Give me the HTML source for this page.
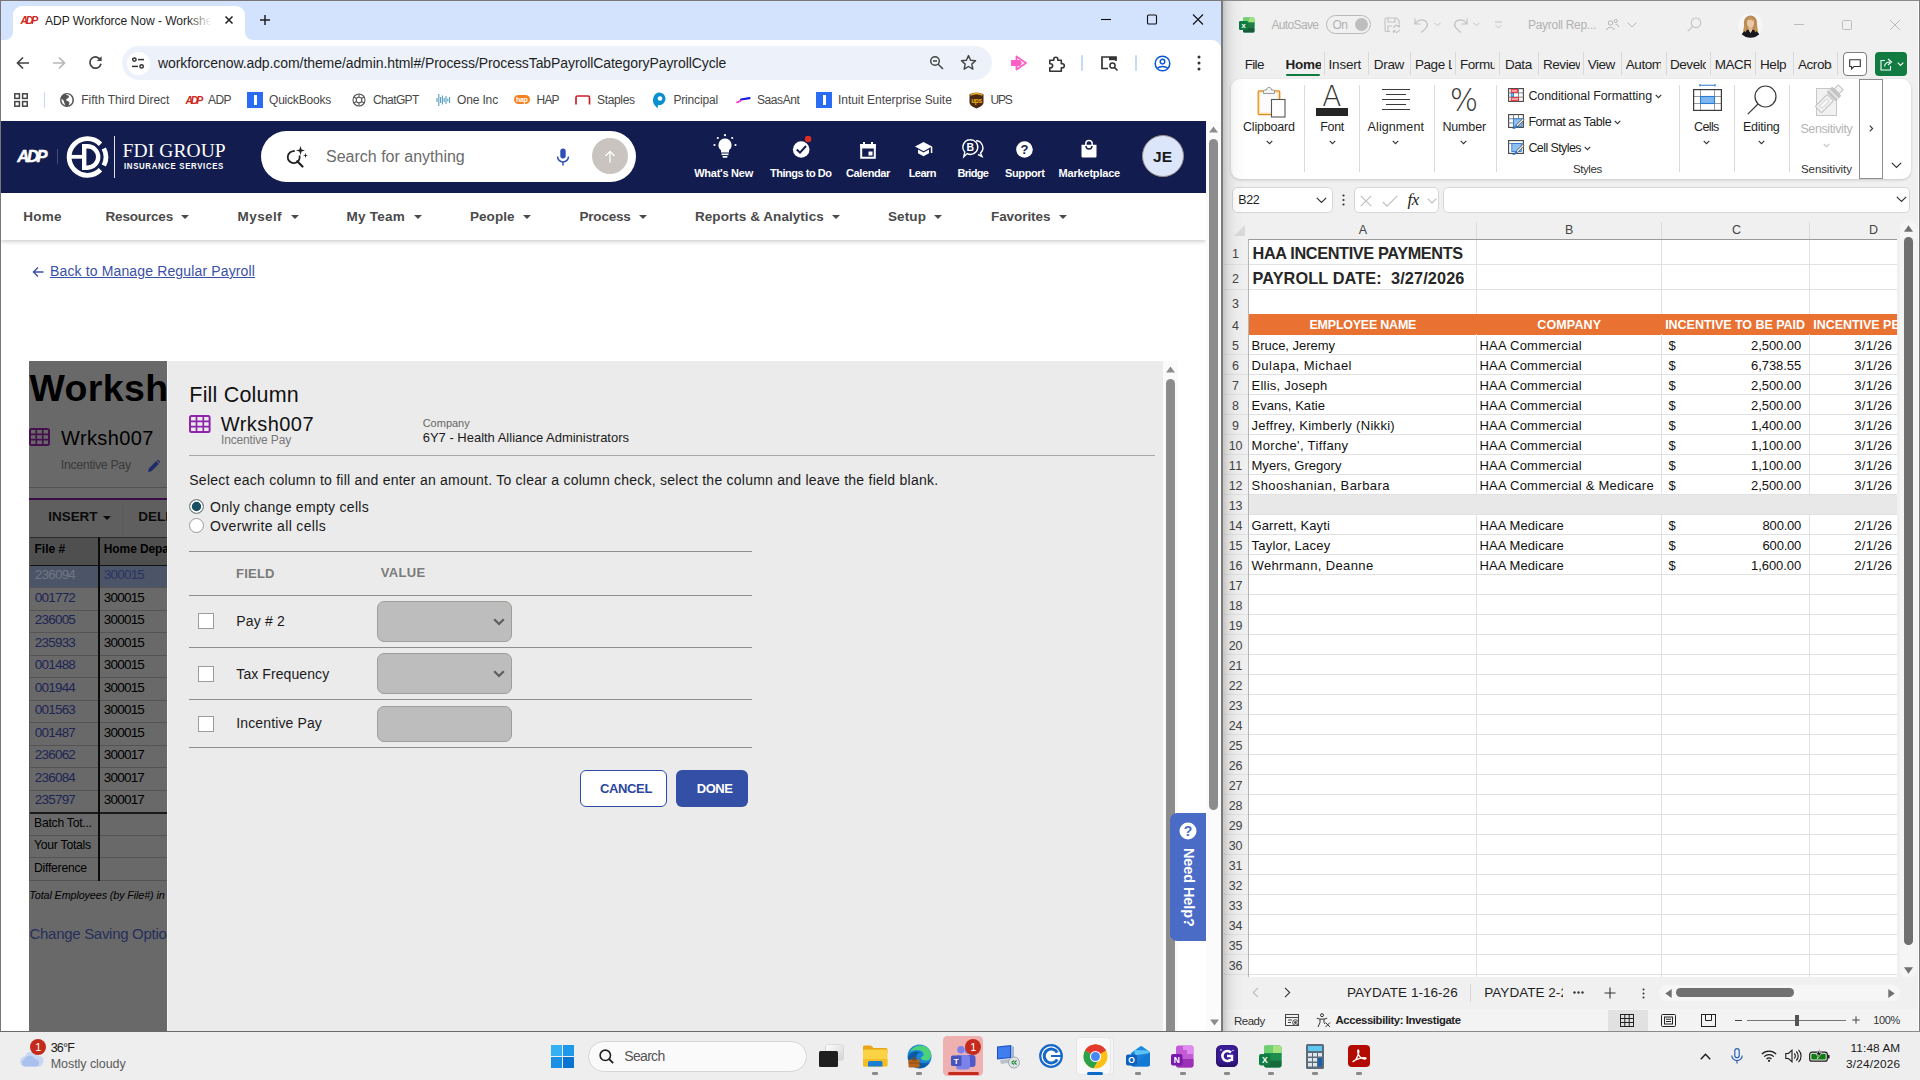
<!DOCTYPE html>
<html lang="en">
<head>
<meta charset="utf-8">
<title>ADP Workforce Now - Worksheet</title>
<style>
*{box-sizing:border-box;margin:0;padding:0}
html,body{width:1920px;height:1080px;overflow:hidden;background:#eeeeee;font-family:"Liberation Sans",sans-serif;color:#1f1f1f}
.abs{position:absolute}
div,span,svg,a{position:absolute;white-space:nowrap}
svg{overflow:visible}
/* ---------- chrome ---------- */
#chrome{left:0;top:0;width:1223px;height:1032px;background:#fff;overflow:hidden}
#tabstrip{left:0;top:0;width:1221px;height:52px;background:#d3e3fd}
#tab{left:13px;top:6px;width:232px;height:34px;background:#fff;border-radius:9px 9px 0 0}
#toolbar{left:1px;top:40px;width:1220px;height:42px;background:#fff;border-radius:0 9px 0 0}
#urlbar{left:122px;top:46px;width:870px;height:34px;border-radius:17px;background:#edf2fa}
#bookmarks{left:1px;top:82px;width:1220px;height:38px;background:#fff;font-size:12px;color:#3c3c3c}
.bm{top:10px;height:16px;line-height:16px;font-size:12px;color:#474747}
/* ---------- adp ---------- */
#adphead{left:1px;top:121px;width:1205px;height:72px;background:#121c4e}
#adpnav{left:1px;top:193px;width:1205px;height:47px;background:#fff;box-shadow:0 2px 4px rgba(0,0,0,.18)}
.nav{top:0;height:47px;line-height:47px;font-size:13.5px;font-weight:700;color:#4a4a4a}
.car{position:absolute;top:21.500px;width:0;height:0;border-left:4px solid transparent;border-right:4px solid transparent;border-top:4.500px solid #4a4a4a}
.hi{color:#fff;font-size:11px;line-height:14px;font-weight:700;top:45px;text-align:center;transform:translateX(-50%)}
/* ---------- excel ---------- */
#excel{left:1223px;top:0;width:697px;height:1032px;background:#f0f0f0;overflow:hidden}
/* ---------- taskbar ---------- */
#taskbar{left:0;top:1032px;width:1920px;height:48px;background:#eeeeee}
</style>
</head>
<body>
<!-- ====================== CHROME WINDOW ====================== -->
<div id="chrome">

 <div id="tabstrip"></div>
 <div id="tab"></div>
 <!-- tab curves -->
 <svg style="left:5px;top:32px" width="8" height="8"><path d="M8 0V8H0A8 8 0 0 0 8 0Z" fill="#fff"/></svg>
 <svg style="left:245px;top:32px" width="8" height="8"><path d="M0 0V8H8A8 8 0 0 1 0 0Z" fill="#fff"/></svg>
 <!-- adp favicon -->
 <svg style="left:21px;top:14px" width="17" height="12" viewBox="0 0 34 20"><g fill="#d0271d" font-family="Liberation Sans, sans-serif" font-weight="700" font-style="italic"><text x="-1" y="17" font-size="21" letter-spacing="-4.5">ADP</text></g></svg>
 <span style="left:45px;top:13px;font-size:12.1px;line-height:16px;color:#1f1f1f;width:168px;overflow:hidden;letter-spacing:-.05px">ADP Workforce Now - Workshee</span>
 <div style="left:188px;top:10px;width:26px;height:20px;background:linear-gradient(90deg,rgba(255,255,255,0),#fff 90%)"></div>
 <svg style="left:224px;top:15px" width="10" height="10" viewBox="0 0 10 10"><path d="M1.5 1.5L8.5 8.5M8.5 1.5L1.5 8.5" stroke="#1f1f1f" stroke-width="1.5" fill="none"/></svg>
 <svg style="left:259px;top:14px" width="12" height="12" viewBox="0 0 12 12"><path d="M6 1V11M1 6H11" stroke="#1f1f1f" stroke-width="1.5" fill="none"/></svg>
 <!-- window controls -->
 <svg style="left:1100px;top:14px" width="104" height="12" viewBox="0 0 104 12"><g stroke="#111" stroke-width="1.1" fill="none"><path d="M1 5.5H11"/><rect x="47.5" y="1" width="9" height="9" rx="1"/><path d="M93 .5L103 10.5M103 .5L93 10.5"/></g></svg>
 <div id="toolbar"></div>
 <!-- nav buttons -->
 <svg style="left:16px;top:56px" width="14" height="14" viewBox="0 0 14 14"><path d="M13 7H2M7 1.5L1.5 7L7 12.5" stroke="#444" stroke-width="1.7" fill="none"/></svg>
 <svg style="left:52px;top:56px" width="14" height="14" viewBox="0 0 14 14"><path d="M1 7H12M7 1.5L12.5 7L7 12.5" stroke="#b8b8b8" stroke-width="1.7" fill="none"/></svg>
 <svg style="left:88px;top:55px" width="15" height="15" viewBox="0 0 15 15"><path d="M12.6 5.2A5.6 5.6 0 1 0 13 8.8" stroke="#444" stroke-width="1.7" fill="none"/><path d="M13.6 1.2V6H8.8Z" fill="#444"/></svg>
 <div id="urlbar"></div>
 <div style="left:127px;top:52px;width:23px;height:23px;border-radius:50%;background:#fff"></div>
 <svg style="left:131px;top:56px" width="14" height="14" viewBox="0 0 14 14"><g stroke="#333" stroke-width="1.5" fill="none"><circle cx="3.4" cy="3.6" r="1.7"/><path d="M7 3.6H13"/><circle cx="10.6" cy="10.4" r="1.7"/><path d="M1 10.4H7"/></g></svg>
 <span style="left:158px;top:54px;font-size:14px;line-height:18px;color:#1f1f1f;letter-spacing:-.08px">workforcenow.adp.com/theme/admin.html#/Process/ProcessTabPayrollCategoryPayrollCycle</span>
 <svg style="left:929px;top:55px" width="16" height="16" viewBox="0 0 16 16"><g stroke="#444" stroke-width="1.5" fill="none"><circle cx="6" cy="6" r="4.3"/><path d="M9.2 9.2L14 14M4 6H8"/></g></svg>
 <svg style="left:960px;top:54px" width="17" height="17" viewBox="0 0 17 17"><path d="M8.5 1.6L10.6 6.3L15.6 6.8L11.8 10.1L12.9 15.1L8.5 12.5L4.1 15.1L5.2 10.1L1.4 6.8L6.4 6.3Z" stroke="#444" stroke-width="1.4" fill="none" stroke-linejoin="round"/></svg>
 <svg style="left:1010px;top:55px" width="18" height="16" viewBox="0 0 18 16"><path d="M1 5H6V11H1Z" fill="#ff5fc4"/><path d="M6.5 1.5L16 8L6.5 14.5Z" stroke="#ff5fc4" stroke-width="1.8" fill="none" stroke-linejoin="round"/><path d="M6 5H10L12 8L10 11H6Z" fill="#ff5fc4"/></svg>
 <svg style="left:1046.500px;top:54px" width="19" height="19" viewBox="0 0 19 19"><path d="M2.800 6.200H6.800V5.200A2 2 0 0 1 10.800 5.200V6.200H14.300V9.700H15.300A2 2 0 0 1 15.300 13.700H14.300V17.200H2.800V13.700H3.600A2 2 0 0 0 3.600 9.700H2.800Z" stroke="#333" stroke-width="1.600" fill="none" stroke-linejoin="round"/></svg>
 <div style="left:1081px;top:55px;width:2px;height:16px;background:#c7d9f7;border-radius:1px"></div>
 <svg style="left:1100px;top:55px" width="19" height="17" viewBox="0 0 19 17"><path d="M8 13.500H2V2H16V6" stroke="#333" stroke-width="1.7" fill="none"/><rect x="9" y="2" width="7" height="3.200" fill="#333"/><circle cx="12.500" cy="10.500" r="2.600" stroke="#333" stroke-width="1.5" fill="none"/><path d="M14.500 12.500L17.500 15.500" stroke="#333" stroke-width="1.6"/></svg>
 <div style="left:1135px;top:55px;width:2px;height:16px;background:#c7d9f7;border-radius:1px"></div>
 <svg style="left:1154px;top:55px" width="17" height="17" viewBox="0 0 17 17"><g stroke="#0b57d0" stroke-width="1.5" fill="none"><circle cx="8.500" cy="8.500" r="7.300"/><circle cx="8.500" cy="6.600" r="2.300"/><path d="M3.300 13.300C5.500 10.900 11.500 10.900 13.700 13.300"/></g></svg>
 <svg style="left:1197px;top:55px" width="4" height="16" viewBox="0 0 4 16"><g fill="#333"><circle cx="2" cy="2" r="1.500"/><circle cx="2" cy="8" r="1.500"/><circle cx="2" cy="14" r="1.500"/></g></svg>
 <div id="bookmarks">
  <svg style="left:13px;top:11px" width="14" height="14" viewBox="0 0 14 14"><g stroke="#444" stroke-width="1.5" fill="none"><rect x=".8" y=".8" width="4.6" height="4.6"/><rect x="8.6" y=".8" width="4.6" height="4.600"/><rect x=".8" y="8.600" width="4.600" height="4.600"/><rect x="8.600" y="8.600" width="4.600" height="4.600"/></g></svg>
  <div style="left:42.500px;top:10px;width:1.500px;height:16px;background:#c7d9f7"></div>
  <svg style="left:59px;top:11px" width="14" height="14" viewBox="0 0 14 14"><circle cx="7" cy="7" r="7" fill="#555"/><path d="M5.500 1.600C7 2.500 8.500 2 9 3.500C9 5 7.500 5 6.500 6C5.500 7.500 7.500 8 8.500 8.500C10 9 9.500 11 8.500 12.300C10.500 12 12.300 10 12.400 7.500C12.600 4 10 1.300 7 1.300Z" fill="#fff"/><path d="M1.500 6C3 6.500 4 7.500 4 9C4 10 5 10.500 5 12.200C2.800 11.500 1.200 9 1.500 6Z" fill="#fff"/></svg>
  <svg style="left:185px;top:13px" width="17" height="10" viewBox="0 0 34 20"><text x="-1" y="17" font-family="Liberation Sans, sans-serif" font-weight="700" font-style="italic" font-size="21" letter-spacing="-4.500" fill="#d0271d">ADP</text></svg>
  <div style="left:246px;top:10px;width:16px;height:16px;background:#2a6df4"></div><div style="left:252.500px;top:13px;width:3px;height:10px;background:#fff"></div>
  <svg style="left:351px;top:11px" width="14" height="14" viewBox="0 0 14 14"><g stroke="#555" stroke-width="1.100" fill="none"><circle cx="7" cy="7" r="6"/><circle cx="7" cy="7" r="2.800"/><path d="M7 1V4.200M7 9.800V13M1.800 4L4.600 5.600M9.400 8.400L12.200 10M1.800 10L4.600 8.400M9.400 5.600L12.200 4"/></g></svg>
  <svg style="left:434.500px;top:10px" width="15" height="16" viewBox="0 0 15 16"><g stroke="#5a9fc0" stroke-width="1.100" fill="none"><path d="M1 6V10M2.800 2V14M4.600 5V11M6.400 3.500V12.500M8.200 6V10M10 4V12M11.800 6.500V9.500M13.600 5V11"/></g></svg>
  <div style="left:513px;top:13px;width:16px;height:9px;border-radius:5px;background:#f58220"></div><span style="left:515px;top:12.500px;font-size:7px;line-height:9px;color:#fff;font-weight:700;letter-spacing:-.3px">hap</span>
  <svg style="left:574px;top:13px" width="16" height="10" viewBox="0 0 16 10"><path d="M1 9.500V2.500Q1 1 2.500 1H13Q14.500 1 14.500 2.500V9.500" stroke="#cc1f2f" stroke-width="1.700" fill="none"/></svg>
  <svg style="left:651px;top:10px" width="14" height="17" viewBox="0 0 14 17"><path d="M7.200 .5A6.300 6.300 0 0 1 13.500 6.800A6.300 6.300 0 0 1 6 13L5.500 16.500L2.500 13C-.5 9.500 1 .8 7.200 .5Z" fill="#0a8fd0"/><circle cx="8" cy="6.500" r="2.300" fill="#fff"/></svg>
  <svg style="left:735px;top:15px" width="15" height="7" viewBox="0 0 15 7"><path d="M5 2.500L13.500 1.200" stroke="#1b1bd6" stroke-width="2.200" stroke-linecap="round"/><path d="M1.200 5.300L4.500 3.800" stroke="#ff3fc0" stroke-width="2" stroke-linecap="round"/></svg>
  <div style="left:815px;top:10px;width:16px;height:16px;background:#2a6df4"></div><div style="left:821.500px;top:13px;width:3px;height:10px;background:#fff"></div>
  <svg style="left:968px;top:10px" width="15" height="17" viewBox="0 0 15 17"><path d="M.5 2.500C4 .3 11 .3 14.500 2.500V10.500C14.500 13.500 10 15.500 7.500 16.500C5 15.500 .5 13.500 .5 10.500Z" fill="#4a2a12"/><path d="M1.500 3.200C5 1.200 10 1.200 13.500 3.200" stroke="#f2b01e" stroke-width="1.300" fill="none"/><text x="7.500" y="11" font-family="Liberation Sans, sans-serif" font-weight="700" font-size="6.500" fill="#f2b01e" text-anchor="middle" letter-spacing="-.3">ups</text></svg>
  <span class="bm" style="left:80.3px;letter-spacing:-0.02px">Fifth Third Direct</span>
  <span class="bm" style="left:207px;letter-spacing:-0.562px">ADP</span>
  <span class="bm" style="left:268px;letter-spacing:-0.203px">QuickBooks</span>
  <span class="bm" style="left:372px;letter-spacing:-0.617px">ChatGPT</span>
  <span class="bm" style="left:456px;letter-spacing:-0.147px">One Inc</span>
  <span class="bm" style="left:535.6px;letter-spacing:-0.829px">HAP</span>
  <span class="bm" style="left:596px;letter-spacing:-0.333px">Staples</span>
  <span class="bm" style="left:672.4px;letter-spacing:-0.159px">Principal</span>
  <span class="bm" style="left:756px;letter-spacing:-0.411px">SaasAnt</span>
  <span class="bm" style="left:837px;letter-spacing:-0.041px">Intuit Enterprise Suite</span>
  <span class="bm" style="left:989.5px;letter-spacing:-1.263px">UPS</span>
 </div>
 <div id="adphead">
  <svg style="left:16px;top:27.500px" width="32" height="15" viewBox="0 0 32 15"><text x=".3" y="13.300" font-family="Liberation Sans, sans-serif" font-weight="700" font-style="italic" font-size="16.500" letter-spacing="-2.300" fill="#fff" stroke="#fff" stroke-width=".5">ADP</text></svg>
  <div style="left:56px;top:28px;width:1px;height:15px;background:#454d77"></div>
  <svg style="left:64.500px;top:15px" width="42" height="42" viewBox="0 0 42 42"><g fill="none" stroke="#fff"><path d="M34.500 8.200A18.300 18.300 0 1 0 34.500 33.800" stroke-width="4.800"/><path d="M37.800 12.500A18.300 18.300 0 0 1 37.800 29.500" stroke-width="4.800"/><path d="M3 20.800H18" stroke-width="3.800"/><path d="M18.200 10.300H21.500A10.700 10.700 0 0 1 21.500 31.700H18.200Z" stroke-width="4.400"/></g></svg>
  <div style="left:113px;top:15px;width:1px;height:42px;background:#dfe2ee"></div>
  <span style="left:121.5px;top:19.5px;font-family:'Liberation Serif',serif;font-size:19.500px;line-height:20px;color:#fff;letter-spacing:.1px">FDI GROUP</span>
  <span style="left:122.7px;top:40.5px;font-size:8.500px;line-height:10px;color:#fff;font-weight:700;letter-spacing:.72px;transform-origin:0 0;transform:scaleX(.92);margin-top:-1px">INSURANCE SERVICES</span>
  <div style="left:260px;top:9.5px;width:375px;height:51px;border-radius:26px;background:#fff"></div>
  <svg style="left:285px;top:25px" width="22" height="22" viewBox="0 0 22 22"><g fill="none" stroke="#222" stroke-width="1.800"><path d="M13.500 9.500A6 6 0 1 1 8.800 5.200"/><path d="M11.300 15.200L16.500 20.500" stroke-width="2.200" stroke-linecap="round"/></g><path d="M14.500 0L15.600 3.400L19 4.500L15.600 5.600L14.500 9L13.400 5.600L10 4.500L13.400 3.400Z" fill="#222"/><path d="M19.500 7L20.100 8.900L22 9.500L20.100 10.100L19.500 12L18.900 10.100L17 9.500L18.900 8.900Z" fill="#222"/></svg>
  <span style="left:325px;top:26.2px;font-size:16px;line-height:20px;color:#6b6b6b">Search for anything</span>
  <svg style="left:554.5px;top:27px" width="14" height="18" viewBox="0 0 14 18"><rect x="4.300" y=".5" width="5.400" height="10" rx="2.700" fill="#2f4fb5"/><path d="M1.500 8.500A5.500 5.500 0 0 0 12.500 8.500M7 14V17.500" stroke="#2f4fb5" stroke-width="1.500" fill="none"/></svg>
  <div style="left:591px;top:17px;width:36px;height:36px;border-radius:50%;background:#c9c4bf"></div>
  <svg style="left:603px;top:29px" width="12" height="13" viewBox="0 0 12 13"><path d="M6 12.500V1.500M1.500 6L6 1.500L10.500 6" stroke="#fff" stroke-width="1.300" fill="none"/></svg>
  <svg style="left:711.5px;top:13px" width="24" height="25" viewBox="0 0 24 25"><g fill="#fff"><path d="M12 4.500A6.600 6.600 0 0 1 16 16.300V18.500H8V16.300A6.600 6.600 0 0 1 12 4.500Z"/><rect x="8.500" y="19.500" width="7" height="1.600"/><rect x="9.500" y="22" width="5" height="1.800" rx=".8"/><circle cx="12" cy="1.200" r="1.100"/><circle cx="4.800" cy="4" r="1.100"/><circle cx="19.200" cy="4" r="1.100"/><circle cx="1.500" cy="11" r="1.100"/><circle cx="22.500" cy="11" r="1.100"/></g></svg>
  <svg style="left:790.5px;top:14px" width="24" height="24" viewBox="0 0 24 24"><circle cx="9.200" cy="14.500" r="8.300" fill="#fff"/><path d="M4.800 14.500L8 17.600L14 11" stroke="#121c4e" stroke-width="2" fill="none"/><circle cx="16.100" cy="4" r="4.300" fill="#121c4e"/><circle cx="16.100" cy="4" r="3.300" fill="#d93025"/></svg>
  <svg style="left:858.5px;top:20.5px" width="16" height="17" viewBox="0 0 16 17"><path d="M1.200 3H14.800V15.800H1.200Z" stroke="#fff" stroke-width="2" fill="none"/><rect x=".2" y="2" width="15.600" height="4.500" fill="#fff"/><rect x="3" y="0" width="2" height="3" fill="#fff"/><rect x="11" y="0" width="2" height="3" fill="#fff"/><rect x="8.500" y="9.500" width="4" height="4" fill="#fff"/></svg>
  <svg style="left:913.5px;top:21.3px" width="18" height="15" viewBox="0 0 18 15"><path d="M8.500 0L17 4.600L8.500 9.200L0 4.600Z" fill="#fff"/><path d="M3 7.600V11.300L8.500 14.300L14 11.300V7.600L8.500 10.600Z" fill="#fff"/><rect x="15.800" y="4.600" width="1.500" height="6.400" fill="#fff"/></svg>
  <svg style="left:960.5px;top:18.3px" width="23" height="19" viewBox="0 0 23 19"><g fill="none" stroke="#fff" stroke-width="1.400"><path d="M14 1.800A7 7 0 0 1 18.500 14L20 17.500L16 15.500"/><path d="M8.200 .8A7.300 7.300 0 1 1 5.200 14.600L1.800 17.800L2.800 13A7.300 7.300 0 0 1 8.200 .8Z" fill="#121c4e"/></g><text x="8.300" y="12" font-family="Liberation Sans, sans-serif" font-weight="700" font-size="10.500" fill="#fff" text-anchor="middle">B</text></svg>
  <svg style="left:1015.3px;top:20px" width="17" height="17" viewBox="0 0 17 17"><circle cx="8.500" cy="8.500" r="8.300" fill="#fff"/><text x="8.500" y="13.200" font-family="Liberation Sans, sans-serif" font-weight="700" font-size="13" fill="#121c4e" text-anchor="middle">?</text></svg>
  <svg style="left:1079.8px;top:19.3px" width="16" height="18" viewBox="0 0 16 18"><path d="M.5 4.800H15.500V16.300A1.200 1.200 0 0 1 14.300 17.500H1.700A1.200 1.200 0 0 1 .5 16.300Z" fill="#fff"/><path d="M4.800 5V3.800A3.200 3.200 0 0 1 11.200 3.800V5" stroke="#fff" stroke-width="1.500" fill="none"/><path d="M5 6A3 3 0 0 0 11 6" stroke="#121c4e" stroke-width="1.400" fill="none"/></svg>
  <span class="hi" style="left:722.6px;letter-spacing:-0.26px">What's New</span>
  <span class="hi" style="left:799.7px;letter-spacing:-0.485px">Things to Do</span>
  <span class="hi" style="left:867px;letter-spacing:-0.385px">Calendar</span>
  <span class="hi" style="left:921.3px;letter-spacing:-0.534px">Learn</span>
  <span class="hi" style="left:971.9px;letter-spacing:-0.657px">Bridge</span>
  <span class="hi" style="left:1023.8px;letter-spacing:-0.382px">Support</span>
  <span class="hi" style="left:1088.3px;letter-spacing:-0.199px">Marketplace</span>
  <div style="left:1140.5px;top:14.2px;width:42px;height:42px;border-radius:50%;background:#dbe6fa;border:1px solid #9a8f8a"></div>
  <span style="left:1140.7px;top:26.5px;width:42px;text-align:center;font-size:15.500px;line-height:18px;font-weight:700;color:#1a1a1a;letter-spacing:.3px">JE</span>
 </div>
 <div id="adpnav">
  <span class="nav" style="left:22.3px;letter-spacing:0.246px">Home</span>
  <span class="nav" style="left:104.5px;letter-spacing:-0.172px">Resources</span>
  <i class="car" style="left:180.4px"></i>
  <span class="nav" style="left:236.6px;letter-spacing:0.395px">Myself</span>
  <i class="car" style="left:289.5px"></i>
  <span class="nav" style="left:345.4px;letter-spacing:0.26px">My Team</span>
  <i class="car" style="left:412.5px"></i>
  <span class="nav" style="left:469px;letter-spacing:0.056px">People</span>
  <i class="car" style="left:522px"></i>
  <span class="nav" style="left:578.5px;letter-spacing:-0.207px">Process</span>
  <i class="car" style="left:638px"></i>
  <span class="nav" style="left:694px;letter-spacing:0.053px">Reports & Analytics</span>
  <i class="car" style="left:831.4px"></i>
  <span class="nav" style="left:887px;letter-spacing:0.097px">Setup</span>
  <i class="car" style="left:933.4px"></i>
  <span class="nav" style="left:990px;letter-spacing:-0.07px">Favorites</span>
  <i class="car" style="left:1058px"></i>
 </div>
 <svg style="left:31.500px;top:266px" width="12" height="12" viewBox="0 0 12 12"><path d="M11.500 6H1.500M6 1.500L1.500 6L6 10.500" stroke="#3a50a8" stroke-width="1.400" fill="none"/></svg>
 <a style="left:50px;top:263px;font-size:14px;line-height:17px;color:#3a50a8;text-decoration:underline;letter-spacing:0.141px">Back to Manage Regular Payroll</a>
 <div id="dim" style="left:29px;top:361px;width:138px;height:671px;background:#696969;overflow:hidden">
   <span style="left:0.5px;top:7px;font-size:37.500px;line-height:40px;font-weight:700;color:#000;letter-spacing:.35px">Worksheet</span>
   <svg style="left:0.2px;top:67.3px" width="21" height="18" viewBox="0 0 21 18"><g stroke="#46104f" fill="none"><rect x="1" y="1" width="19" height="16" rx="1.500" stroke-width="2"/><path d="M1 6.300H20M1 11.700H20M7.300 1V17M13.700 1V17" stroke-width="1.700"/></g></svg>
   <span style="left:32px;top:64.5px;font-size:20px;line-height:24px;color:#000;letter-spacing:0.379px">Wrksh007</span>
   <span style="left:31.8px;top:96px;font-size:12.500px;line-height:16px;color:#3b3b3b;letter-spacing:-0.388px">Incentive Pay</span>
   <svg style="left:118.5px;top:99px" width="12" height="12" viewBox="0 0 12 12"><path d="M0 12L.8 8.500L8.200 1.100L10.900 3.800L3.500 11.200Z" fill="#1f2d66"/><path d="M9 .4L9.900 -.400L12.400 2.100L11.600 3Z" fill="#1f2d66"/></svg>
   <div style="left:0;top:126px;width:138px;height:1px;background:#525252"></div>
   <div style="left:0;top:136.5px;width:138px;height:2.500px;background:#3a0d48"></div>
   <div style="left:0;top:139px;width:138px;height:37px;background:#5f5f5f"></div>
   <div style="left:93px;top:141px;width:1px;height:33px;background:#5a5a5a"></div>
   <span style="left:19.3px;top:148.3px;font-size:13.500px;line-height:16px;font-weight:700;color:#0b0b0b;letter-spacing:-0.053px">INSERT</span>
   <i class="car" style="left:73.5px;top:154.5px;border-top-color:#0b0b0b"></i>
   <span style="left:109.3px;top:148.3px;font-size:13.500px;line-height:16px;font-weight:700;color:#0b0b0b;letter-spacing:-0.053px">DELETE</span>
   <div style="left:0;top:175.5px;width:138px;height:29px;background:#4f4f4f;border-top:1px solid #2c2c2c;border-bottom:1.500px solid #101010"></div>
   <span style="left:5.5px;top:180.5px;font-size:12px;line-height:14px;font-weight:700;color:#000">File #</span>
   <span style="left:74.8px;top:180.5px;font-size:12px;line-height:14px;font-weight:700;color:#000;letter-spacing:-.1px">Home Department</span>
   <div style="left:0;top:204.5px;width:138px;height:22px;background:#4c5567"></div>
   <span style="left:5.8px;top:206.1px;font-size:13.500px;line-height:16px;color:#6f7583;letter-spacing:-0.794px">236094</span>
   <span style="left:74.8px;top:206.1px;font-size:13.500px;line-height:16px;color:#2a3362;letter-spacing:-0.794px">300015</span>
   <div style="left:0;top:226.0px;width:138px;height:1px;background:#545454"></div>
   <span style="left:5.8px;top:228.6px;font-size:13.500px;line-height:16px;color:#1e2554;letter-spacing:-0.794px">001772</span>
   <span style="left:74.8px;top:228.6px;font-size:13.500px;line-height:16px;color:#000;letter-spacing:-0.794px">300015</span>
   <div style="left:0;top:248.5px;width:138px;height:1px;background:#545454"></div>
   <span style="left:5.8px;top:251.1px;font-size:13.500px;line-height:16px;color:#1e2554;letter-spacing:-0.794px">236005</span>
   <span style="left:74.8px;top:251.1px;font-size:13.500px;line-height:16px;color:#000;letter-spacing:-0.794px">300015</span>
   <div style="left:0;top:271.0px;width:138px;height:1px;background:#545454"></div>
   <span style="left:5.8px;top:273.6px;font-size:13.500px;line-height:16px;color:#1e2554;letter-spacing:-0.794px">235933</span>
   <span style="left:74.8px;top:273.6px;font-size:13.500px;line-height:16px;color:#000;letter-spacing:-0.794px">300015</span>
   <div style="left:0;top:293.5px;width:138px;height:1px;background:#545454"></div>
   <span style="left:5.8px;top:296.1px;font-size:13.500px;line-height:16px;color:#1e2554;letter-spacing:-0.794px">001488</span>
   <span style="left:74.8px;top:296.1px;font-size:13.500px;line-height:16px;color:#000;letter-spacing:-0.794px">300015</span>
   <div style="left:0;top:316.0px;width:138px;height:1px;background:#545454"></div>
   <span style="left:5.8px;top:318.6px;font-size:13.500px;line-height:16px;color:#1e2554;letter-spacing:-0.794px">001944</span>
   <span style="left:74.8px;top:318.6px;font-size:13.500px;line-height:16px;color:#000;letter-spacing:-0.794px">300015</span>
   <div style="left:0;top:338.5px;width:138px;height:1px;background:#545454"></div>
   <span style="left:5.8px;top:341.1px;font-size:13.500px;line-height:16px;color:#1e2554;letter-spacing:-0.794px">001563</span>
   <span style="left:74.8px;top:341.1px;font-size:13.500px;line-height:16px;color:#000;letter-spacing:-0.794px">300015</span>
   <div style="left:0;top:361.0px;width:138px;height:1px;background:#545454"></div>
   <span style="left:5.8px;top:363.6px;font-size:13.500px;line-height:16px;color:#1e2554;letter-spacing:-0.794px">001487</span>
   <span style="left:74.8px;top:363.6px;font-size:13.500px;line-height:16px;color:#000;letter-spacing:-0.794px">300015</span>
   <div style="left:0;top:383.5px;width:138px;height:1px;background:#545454"></div>
   <span style="left:5.8px;top:386.1px;font-size:13.500px;line-height:16px;color:#1e2554;letter-spacing:-0.794px">236062</span>
   <span style="left:74.8px;top:386.1px;font-size:13.500px;line-height:16px;color:#000;letter-spacing:-0.794px">300017</span>
   <div style="left:0;top:406.0px;width:138px;height:1px;background:#545454"></div>
   <span style="left:5.8px;top:408.6px;font-size:13.500px;line-height:16px;color:#1e2554;letter-spacing:-0.794px">236084</span>
   <span style="left:74.8px;top:408.6px;font-size:13.500px;line-height:16px;color:#000;letter-spacing:-0.794px">300017</span>
   <div style="left:0;top:428.5px;width:138px;height:1px;background:#545454"></div>
   <span style="left:5.8px;top:431.1px;font-size:13.500px;line-height:16px;color:#1e2554;letter-spacing:-0.794px">235797</span>
   <span style="left:74.8px;top:431.1px;font-size:13.500px;line-height:16px;color:#000;letter-spacing:-0.794px">300017</span>
   <div style="left:0;top:451.3px;width:138px;height:1.500px;background:#1a1a1a"></div>
   <span style="left:5px;top:453.5px;font-size:12.2px;line-height:16px;color:#000;letter-spacing:-.25px">Batch Tot...</span>
   <div style="left:0;top:473.5px;width:138px;height:1px;background:#545454"></div>
   <span style="left:5px;top:476.0px;font-size:12.2px;line-height:16px;color:#000;letter-spacing:-.25px">Your Totals</span>
   <div style="left:0;top:496.0px;width:138px;height:1px;background:#545454"></div>
   <span style="left:5px;top:498.5px;font-size:12.2px;line-height:16px;color:#000;letter-spacing:-.25px">Difference</span>
   <div style="left:0;top:518.5px;width:138px;height:1px;background:#545454"></div>
   <div style="left:68.5px;top:176px;width:2px;height:343.5px;background:#0c0c0c"></div>
   <div style="left:0;top:176px;width:1px;height:343.5px;background:#555"></div>
   <span style="left:0.3px;top:527.5px;font-size:10.800px;line-height:13px;font-style:italic;color:#000;letter-spacing:-.12px">Total Employees (by File#) in this batch</span>
   <span style="left:0.5px;top:564px;font-size:15px;line-height:18px;color:#262f5c;letter-spacing:-0.295px">Change Saving Options</span>
 </div>
 <div id="modal" style="left:167px;top:361px;width:996px;height:671px;background:#ebebeb;overflow:hidden">
   <span style="left:22.3px;top:20.5px;font-size:21.500px;line-height:26px;color:#111;letter-spacing:0.197px">Fill Column</span>
   <svg style="left:22.3px;top:54px" width="22" height="18" viewBox="0 0 22 18"><g stroke="#8e24aa" fill="none"><rect x="1" y="1" width="19.600" height="16" rx="1.500" stroke-width="2"/><path d="M1 6.300H21M1 11.700H21M7.500 1V17M14.300 1V17" stroke-width="1.700"/></g></svg>
   <span style="left:53.7px;top:51.3px;font-size:20px;line-height:24px;color:#111;letter-spacing:0.454px">Wrksh007</span>
   <span style="left:54px;top:71.5px;font-size:12px;line-height:14px;color:#777;letter-spacing:-0.157px">Incentive Pay</span>
   <span style="left:255.7px;top:56px;font-size:11px;line-height:13px;color:#666;letter-spacing:-0.011px">Company</span>
   <span style="left:255.7px;top:69px;font-size:13px;line-height:15px;color:#1a1a1a;letter-spacing:-0.01px">6Y7 - Health Alliance Administrators</span>
   <div style="left:22px;top:93.5px;width:966px;height:1px;background:#a8a8a8"></div>
   <span style="left:22.3px;top:110.5px;font-size:14px;line-height:17px;color:#1a1a1a;letter-spacing:0.238px">Select each column to fill and enter an amount. To clear a column check, select the column and leave the field blank.</span>
   <div style="left:22.2px;top:137.5px;width:15px;height:15px;border-radius:50%;background:#174f63;border:1.300px solid #8a8a8a;box-shadow:inset 0 0 0 1.800px #fff"></div>
   <div style="left:22.2px;top:156.5px;width:15px;height:15px;border-radius:50%;background:#fff;border:1.300px solid #9a9a9a"></div>
   <span style="left:43px;top:138.0px;font-size:14px;line-height:17px;color:#1a1a1a;letter-spacing:0.281px">Only change empty cells</span>
   <span style="left:43px;top:157.3px;font-size:14px;line-height:17px;color:#1a1a1a;letter-spacing:0.331px">Overwrite all cells</span>
   <div style="left:22px;top:189.5px;width:563px;height:1px;background:#8f8f8f"></div>
   <div style="left:22px;top:233.5px;width:563px;height:1px;background:#8f8f8f"></div>
   <div style="left:22px;top:286px;width:563px;height:1px;background:#8f8f8f"></div>
   <div style="left:22px;top:338px;width:563px;height:1px;background:#8f8f8f"></div>
   <div style="left:22px;top:386px;width:563px;height:1px;background:#8f8f8f"></div>
   <span style="left:69px;top:205px;font-size:13px;line-height:16px;font-weight:700;color:#7b7b7b;letter-spacing:0.228px">FIELD</span>
   <span style="left:213.7px;top:204px;font-size:13px;line-height:16px;font-weight:700;color:#7b7b7b;letter-spacing:0.378px">VALUE</span>
   <div style="left:31px;top:252.3px;width:16px;height:16px;background:#fff;border:1px solid #9c9c9c"></div>
   <span style="left:69.3px;top:252.3px;font-size:14px;line-height:17px;color:#1a1a1a;letter-spacing:0.174px">Pay # 2</span>
   <div style="left:210px;top:240px;width:135px;height:40.7px;background:#bdbdbd;border:1px solid #a29d99;border-radius:7px"></div>
   <svg style="left:326px;top:256.8px" width="12" height="8" viewBox="0 0 12 8"><path d="M1.200 1.200L6 6L10.800 1.200" stroke="#5e5e5e" stroke-width="2.200" fill="none"/></svg>
   <div style="left:31px;top:304.5px;width:16px;height:16px;background:#fff;border:1px solid #9c9c9c"></div>
   <span style="left:69.3px;top:304.5px;font-size:14px;line-height:17px;color:#1a1a1a;letter-spacing:0.09px">Tax Frequency</span>
   <div style="left:210px;top:292.3px;width:135px;height:40.4px;background:#bdbdbd;border:1px solid #a29d99;border-radius:7px"></div>
   <svg style="left:326px;top:309.0px" width="12" height="8" viewBox="0 0 12 8"><path d="M1.200 1.200L6 6L10.800 1.200" stroke="#5e5e5e" stroke-width="2.200" fill="none"/></svg>
   <div style="left:31px;top:354.5px;width:16px;height:16px;background:#fff;border:1px solid #9c9c9c"></div>
   <span style="left:69.3px;top:354.2px;font-size:14px;line-height:17px;color:#1a1a1a;letter-spacing:0.126px">Incentive Pay</span>
   <div style="left:210px;top:345px;width:135px;height:35.7px;background:#bdbdbd;border:1px solid #a29d99;border-radius:7px"></div>
   <div style="left:413px;top:409px;width:87px;height:37px;background:#fff;border:1.500px solid #2f4aa3;border-radius:6px"></div>
   <span style="left:433px;top:419.5px;font-size:13px;line-height:16px;font-weight:700;color:#2c46a0;letter-spacing:-0.362px">CANCEL</span>
   <div style="left:509px;top:409px;width:72px;height:37px;background:#334fa6;border-radius:6px"></div>
   <span style="left:529.8px;top:419.5px;font-size:13px;line-height:16px;font-weight:700;color:#fff;letter-spacing:-0.466px">DONE</span>
 </div>
 <div style="left:167px;top:361px;width:1px;height:671px;background:#f6f6f6"></div>
 <div style="left:1163px;top:361px;width:15px;height:671px;background:#fafafa"></div>
 <svg style="left:1166px;top:366px" width="9" height="7" viewBox="0 0 9 7"><path d="M4.500 .5L9 6.500H0Z" fill="#8c8c8c"/></svg>
 <div style="left:1166px;top:379px;width:9px;height:660px;border-radius:4.500px;background:#8c8c8c"></div>
 <div style="left:1170px;top:813px;width:36px;height:128px;background:#4a6bc6;border-radius:7px 0 0 7px"></div>
 <svg style="left:1179px;top:822px" width="18" height="18" viewBox="0 0 18 18"><circle cx="9" cy="9" r="8.500" fill="#fff"/><text x="9" y="14" font-family="Liberation Sans, sans-serif" font-weight="700" font-size="14" fill="#4a6bc6" text-anchor="middle">?</text></svg>
 <span style="left:1196.500px;top:848px;font-size:14.500px;line-height:16px;font-weight:700;color:#fff;transform-origin:0 0;transform:rotate(90deg);letter-spacing:-.1px">Need Help?</span>
 <div style="left:1206px;top:121px;width:15px;height:911px;background:#fbfbfb"></div>
 <svg style="left:1209px;top:126px" width="9" height="7" viewBox="0 0 9 7"><path d="M4.500 .5L9 6.500H0Z" fill="#8c8c8c"/></svg>
 <div style="left:1209px;top:139px;width:9px;height:671px;border-radius:4.500px;background:#8c8c8c"></div>
 <svg style="left:1209.500px;top:1019px" width="9" height="7" viewBox="0 0 9 7"><path d="M4.500 6.500L9 .5H0Z" fill="#8c8c8c"/></svg>
 <div style="left:0;top:0;width:1223px;height:1px;background:#777"></div>
 <div style="left:0;top:0;width:1px;height:1032px;background:#777"></div>
 <div style="left:1221px;top:0;width:2px;height:1032px;background:#7a7a7a"></div>
 <div style="left:0;top:1031px;width:1223px;height:1px;background:#6a6a6a"></div>
</div>
<!-- ====================== EXCEL WINDOW ====================== -->
<div id="excel">
 <div style="left:0;top:0;width:697px;height:1px;background:#8a8a8a"></div>
 <svg style="left:15.8px;top:17px" width="16" height="16" viewBox="0 0 16 16"><rect x="4" y=".5" width="11.500" height="15" rx="1.500" fill="#21a366"/><rect x="4" y=".5" width="6" height="5" fill="#6fd06f"/><rect x="10" y=".5" width="5.500" height="5" rx="1" fill="#a7e27c"/><rect x="4" y="5.500" width="11.500" height="5" fill="#1e7e45"/><rect x="4" y="10.500" width="11.500" height="5" rx="1.500" fill="#185c37"/><rect x="0" y="4" width="9" height="9" rx="1.200" fill="#107c41"/><text x="4.500" y="11.300" font-family="Liberation Sans, sans-serif" font-weight="700" font-size="7.500" fill="#fff" text-anchor="middle">x</text></svg>
 <span style="left:48.4px;top:17.5px;font-size:12px;line-height:15px;color:#b2b2b2;letter-spacing:-0.631px;">AutoSave</span>
 <div style="left:103.3px;top:14.500px;width:45px;height:19.500px;border:1px solid #b9b9b9;border-radius:10px"></div>
 <span style="left:109.5px;top:17.5px;font-size:12px;line-height:15px;color:#b2b2b2;letter-spacing:-0.508px;">On</span>
 <div style="left:131.8px;top:18px;width:13px;height:13px;border-radius:50%;background:#bdbdbd"></div>
 <svg style="left:160.7px;top:17px" width="17" height="16" viewBox="0 0 17 16"><g stroke="#c2c2c2" stroke-width="1.100" fill="none"><path d="M6 14.500H2.500A1.500 1.500 0 0 1 1 13V2.500A1.500 1.500 0 0 1 2.500 1H12.500L15 3.500V7"/><path d="M4 1V5H11V1M4 14V9H8"/><path d="M9.500 11A3.300 3.300 0 0 1 15.300 9.500M15.600 12.500A3.300 3.300 0 0 1 9.800 14"/><path d="M15.500 7.500V9.800H13.200M9.500 16V13.700H11.800"/></g></svg>
 <svg style="left:190.5px;top:17px" width="15" height="16" viewBox="0 0 15 16"><path d="M1 1.500V7H6.500M1.500 6.500C4 2.500 9.500 1.500 12.500 5C15 8.500 12 12 7 15.500" stroke="#c2c2c2" stroke-width="1.200" fill="none"/></svg>
 <svg style="left:211px;top:22px" width="7" height="5" viewBox="0 0 7 5"><path d="M.5 .8L3.500 3.800L6.500 .8" stroke="#c2c2c2" stroke-width="1" fill="none"/></svg>
 <svg style="left:230px;top:17px" width="15" height="16" viewBox="0 0 15 16"><path d="M14 1.500V7H8.500M13.500 6.500C11 2.500 5.500 1.500 2.500 5C0 8.500 3 12 8 15.500" stroke="#c2c2c2" stroke-width="1.200" fill="none"/></svg>
 <svg style="left:250px;top:22px" width="7" height="5" viewBox="0 0 7 5"><path d="M.5 .8L3.500 3.800L6.500 .8" stroke="#c2c2c2" stroke-width="1" fill="none"/></svg>
 <svg style="left:271px;top:21px" width="9" height="8" viewBox="0 0 9 8"><path d="M1 1H8M1.500 4L4.500 7L7.500 4" stroke="#c2c2c2" stroke-width="1" fill="none"/></svg>
 <span style="left:305px;top:18.0px;font-size:12px;line-height:15px;color:#b2b2b2;letter-spacing:-0.288px;">Payroll Rep...</span>
 <svg style="left:383px;top:18px" width="13" height="13" viewBox="0 0 13 13"><g stroke="#b5b5b5" stroke-width="1" fill="none"><circle cx="4.500" cy="5" r="2.200"/><path d="M.8 12C1 8.500 8 8.500 8.200 12"/><circle cx="9.800" cy="3" r="1.600"/><path d="M9.500 6.300C11.500 6 12.500 7.500 12.500 9"/></g></svg>
 <svg style="left:403.5px;top:22px" width="10" height="6" viewBox="0 0 10 6"><path d="M.7 .7L5 5L9.300 .7" stroke="#b5b5b5" stroke-width="1" fill="none"/></svg>
 <svg style="left:464px;top:17px" width="15" height="15" viewBox="0 0 15 15"><g stroke="#c2c2c2" stroke-width="1.100" fill="none"><circle cx="9" cy="5.800" r="4.800"/><path d="M5.600 9.400L.8 14.200"/></g></svg>
 <svg style="left:515.3px;top:13px" width="25" height="25" viewBox="0 0 25 25"><defs><clipPath id="avc"><circle cx="12.500" cy="12.500" r="12.200"/></clipPath></defs><g clip-path="url(#avc)"><rect width="25" height="25" fill="#f6f6f6"/><path d="M6 12C5 6 8.500 2.500 12.500 2.500C16.500 2.500 19.500 6 19 11C19 14 20.500 17 19.500 20H5.500C4.500 17 6.300 15 6 12Z" fill="#b98d55"/><ellipse cx="12.500" cy="10" rx="3.600" ry="4.600" fill="#eec7a8"/><path d="M9 7.500C10 5 14.500 4.500 16.200 8C14 7.500 11.500 6.500 9 7.500Z" fill="#c79a5c"/><path d="M10.500 14H14.500V17H10.500Z" fill="#e4b896"/><path d="M2.500 25C3 19.500 7.500 17.500 10.500 16.500L12.500 20L14.500 16.500C17.500 17.500 22 19.500 22.500 25Z" fill="#16181d"/><path d="M10.500 16.500L12.500 20L14.500 16.500L12.500 17.200Z" fill="#efd0b5"/><path d="M6.500 13C6 16 6.500 18.500 8 19.500C8.500 17.500 8 15 7.500 13ZM18.500 13C19 16 18.500 18.500 17 19.500C16.500 17.500 17 15 17.500 13Z" fill="#c79a5c"/></g></svg>
 <svg style="left:571px;top:19px" width="110" height="12" viewBox="0 0 110 12"><g stroke="#bdbdbd" stroke-width="1" fill="none"><path d="M0 5.500H10"/><rect x="48.500" y="1.500" width="9" height="9" rx="1"/><path d="M96 1L106 11M106 1L96 11"/></g></svg>
 <span style="left:21.8px;top:55.5px;font-size:13.5px;line-height:18px;color:#1f1f1f;letter-spacing:-0.716px;">File</span>
 <div style="left:62.6px;top:55.500px;width:35.0px;height:18px;overflow:hidden"><span style="left:0;top:0;font-size:13.500px;line-height:18px;font-weight:700;color:#1f1f1f;letter-spacing:-0.3px">Home</span></div>
 <span style="left:105.6px;top:55.5px;font-size:13.5px;line-height:18px;color:#1f1f1f;letter-spacing:-0.228px;">Insert</span>
 <span style="left:150.8px;top:55.5px;font-size:13.5px;line-height:18px;color:#1f1f1f;letter-spacing:-0.329px;">Draw</span>
 <div style="left:192px;top:55.500px;width:36.8px;height:18px;overflow:hidden"><span style="left:0;top:0;font-size:13.500px;line-height:18px;color:#1f1f1f;letter-spacing:-0.45px">Page Layout</span></div>
 <div style="left:237px;top:55.500px;width:35.3px;height:18px;overflow:hidden"><span style="left:0;top:0;font-size:13.500px;line-height:18px;color:#1f1f1f;letter-spacing:-0.45px">Formulas</span></div>
 <span style="left:282px;top:55.5px;font-size:13.5px;line-height:18px;color:#1f1f1f;letter-spacing:-0.458px;">Data</span>
 <div style="left:320px;top:55.500px;width:36.6px;height:18px;overflow:hidden"><span style="left:0;top:0;font-size:13.500px;line-height:18px;color:#1f1f1f;letter-spacing:-0.45px">Review</span></div>
 <span style="left:364.8px;top:55.5px;font-size:13.5px;line-height:18px;color:#1f1f1f;letter-spacing:-0.508px;">View</span>
 <div style="left:402.8px;top:55.500px;width:35.5px;height:18px;overflow:hidden"><span style="left:0;top:0;font-size:13.500px;line-height:18px;color:#1f1f1f;letter-spacing:-0.45px">Automate</span></div>
 <div style="left:447px;top:55.500px;width:36.3px;height:18px;overflow:hidden"><span style="left:0;top:0;font-size:13.500px;line-height:18px;color:#1f1f1f;letter-spacing:-0.45px">Developer</span></div>
 <div style="left:491.7px;top:55.500px;width:36.1px;height:18px;overflow:hidden"><span style="left:0;top:0;font-size:13.500px;line-height:18px;color:#1f1f1f;letter-spacing:-0.45px">MACROS</span></div>
 <span style="left:537px;top:55.5px;font-size:13.5px;line-height:18px;color:#1f1f1f;letter-spacing:-0.441px;">Help</span>
 <div style="left:575px;top:55.500px;width:33.8px;height:18px;overflow:hidden"><span style="left:0;top:0;font-size:13.500px;line-height:18px;color:#1f1f1f;letter-spacing:-0.45px">Acrobat</span></div>
 <div style="left:101px;top:52px;width:1px;height:23px;background:#d9d9d9"></div>
 <div style="left:144.6px;top:52px;width:1px;height:23px;background:#d9d9d9"></div>
 <div style="left:186.6px;top:52px;width:1px;height:23px;background:#d9d9d9"></div>
 <div style="left:232px;top:52px;width:1px;height:23px;background:#d9d9d9"></div>
 <div style="left:276px;top:52px;width:1px;height:23px;background:#d9d9d9"></div>
 <div style="left:315px;top:52px;width:1px;height:23px;background:#d9d9d9"></div>
 <div style="left:359.7px;top:52px;width:1px;height:23px;background:#d9d9d9"></div>
 <div style="left:398px;top:52px;width:1px;height:23px;background:#d9d9d9"></div>
 <div style="left:442.5px;top:52px;width:1px;height:23px;background:#d9d9d9"></div>
 <div style="left:487px;top:52px;width:1px;height:23px;background:#d9d9d9"></div>
 <div style="left:531.8px;top:52px;width:1px;height:23px;background:#d9d9d9"></div>
 <div style="left:570px;top:52px;width:1px;height:23px;background:#d9d9d9"></div>
 <div style="left:614px;top:52px;width:1px;height:23px;background:#d9d9d9"></div>
 <div style="left:63.3px;top:73.500px;width:33.500px;height:2.500px;background:#107c41;border-radius:1px"></div>
 <div style="left:620.3px;top:52px;width:24px;height:24px;background:#fff;border:1px solid #7d7d7d;border-radius:4px"></div>
 <svg style="left:626.3px;top:58.500px" width="12" height="11" viewBox="0 0 12 11"><path d="M.7 .7H11.300V7.500H5L2.500 10V7.500H.7Z" stroke="#333" stroke-width="1.100" fill="none"/></svg>
 <div style="left:652px;top:52px;width:32px;height:24px;background:#107c41;border-radius:4px"></div>
 <svg style="left:657px;top:57.500px" width="13" height="13" viewBox="0 0 13 13"><path d="M5 2.500H1V12H10.500V8M4.500 8.500C5 5.500 7.500 4 10 4M8 1L11.500 4L8 7" stroke="#fff" stroke-width="1.100" fill="none"/></svg>
 <svg style="left:673.5px;top:62px" width="7" height="5" viewBox="0 0 7 5"><path d="M.7 .7L3.500 3.500L6.300 .7" stroke="#fff" stroke-width="1.100" fill="none"/></svg>
 <div style="left:8px;top:79px;width:679.500px;height:100px;background:#fff;border-radius:9px;box-shadow:0 1px 3px rgba(0,0,0,.18)"></div>
 <div style="left:81.2px;top:84.500px;width:1px;height:87px;background:#dadada"></div>
 <div style="left:136.3px;top:84.500px;width:1px;height:87px;background:#dadada"></div>
 <div style="left:210.6px;top:84.500px;width:1px;height:87px;background:#dadada"></div>
 <div style="left:272.6px;top:84.500px;width:1px;height:87px;background:#dadada"></div>
 <div style="left:456.3px;top:84.500px;width:1px;height:87px;background:#dadada"></div>
 <div style="left:511.4px;top:84.500px;width:1px;height:87px;background:#dadada"></div>
 <div style="left:566.4px;top:84.500px;width:1px;height:87px;background:#dadada"></div>
 <svg style="left:33.5px;top:85.500px" width="29" height="32" viewBox="0 0 29 32"><rect x="1.200" y="5" width="21.500" height="23.500" rx="1" fill="#fbfbfb" stroke="#e08a1e" stroke-width="1.300"/><rect x="2.500" y="6.300" width="18.900" height="20.900" fill="none" stroke="#fbdfa8" stroke-width="1.200"/><path d="M6.500 7.500V5C6.500 4.300 7 4 7.500 4H9.500C9.500 .5 14.500 .5 14.500 4H16.500C17 4 17.500 4.300 17.500 5V7.500Z" fill="#f3f3f3" stroke="#9a9a9a" stroke-width="1"/><rect x="14.500" y="13.500" width="13.500" height="17.500" fill="#fff" stroke="#555" stroke-width="1.100"/></svg>
 <span style="left:20px;top:119.0px;font-size:12.5px;line-height:16px;color:#1f1f1f;letter-spacing:-0.202px;">Clipboard</span>
 <svg style="left:42.5px;top:140.1px" width="7" height="5" viewBox="0 0 7 5"><path d="M.7 .8L3.500 3.600L6.300 .8" stroke="#333" stroke-width="1.100" fill="none"/></svg>
 <span style="left:92.8px;top:79.500px;font-family:'DejaVu Sans','Liberation Sans',sans-serif;font-weight:200;font-size:28px;line-height:34px;color:#333;width:32px;text-align:center">A</span>
 <div style="left:92.8px;top:108.300px;width:32px;height:7.300px;background:#262626"></div>
 <span style="left:97.3px;top:119.0px;font-size:12.5px;line-height:16px;color:#1f1f1f;letter-spacing:-0.329px;">Font</span>
 <svg style="left:105.5px;top:140.1px" width="7" height="5" viewBox="0 0 7 5"><path d="M.7 .8L3.500 3.600L6.300 .8" stroke="#333" stroke-width="1.100" fill="none"/></svg>
 <div style="left:159px;top:88.7px;width:28px;height:1.100px;background:#3a3a3a"></div>
 <div style="left:163.3px;top:93.8px;width:19.5px;height:1.100px;background:#3a3a3a"></div>
 <div style="left:159px;top:98.8px;width:28px;height:1.100px;background:#3a3a3a"></div>
 <div style="left:163.3px;top:103.8px;width:19.5px;height:1.100px;background:#3a3a3a"></div>
 <div style="left:159px;top:108.9px;width:28px;height:1.100px;background:#3a3a3a"></div>
 <span style="left:144.6px;top:119.0px;font-size:12.5px;line-height:16px;color:#1f1f1f;letter-spacing:0.09px;">Alignment</span>
 <svg style="left:169px;top:140.1px" width="7" height="5" viewBox="0 0 7 5"><path d="M.7 .8L3.500 3.600L6.300 .8" stroke="#333" stroke-width="1.100" fill="none"/></svg>
 <span style="left:220.5px;top:80px;font-family:'DejaVu Sans','Liberation Sans',sans-serif;font-weight:200;font-size:32.500px;line-height:40px;color:#3a3a3a;width:40px;text-align:center;transform:scaleX(.92)">%</span>
 <span style="left:219.4px;top:119.0px;font-size:12.5px;line-height:16px;color:#1f1f1f;letter-spacing:-0.145px;">Number</span>
 <svg style="left:237px;top:140.1px" width="7" height="5" viewBox="0 0 7 5"><path d="M.7 .8L3.500 3.600L6.300 .8" stroke="#333" stroke-width="1.100" fill="none"/></svg>
 <svg style="left:285.3px;top:88px" width="16" height="14" viewBox="0 0 16 14"><rect x=".6" y=".6" width="14.800" height="12.800" fill="#fff" stroke="#444" stroke-width="1.100"/><path d="M.6 4.900H15.400M.6 9.100H15.400M5.500 .6V13.400M10.500 .6V13.400" stroke="#777" stroke-width=".9"/><rect x="3.200" y="1.300" width="6.300" height="3" fill="#f7a6aa" stroke="#e0262d" stroke-width=".9"/><rect x="3.200" y="5.500" width="2.300" height="3" fill="#7fb6ee" stroke="#2b7cd3" stroke-width=".8"/><rect x="3.200" y="9.700" width="7.300" height="3" fill="#f7a6aa" stroke="#e0262d" stroke-width=".9"/></svg>
 <span style="left:305.4px;top:87.5px;font-size:12.5px;line-height:16px;color:#1f1f1f;letter-spacing:-0.098px;">Conditional Formatting</span>
 <svg style="left:432.3px;top:93.5px" width="7" height="5" viewBox="0 0 7 5"><path d="M.7 .8L3.500 3.600L6.300 .8" stroke="#333" stroke-width="1.100" fill="none"/></svg>
 <svg style="left:285.3px;top:113.500px" width="17" height="16" viewBox="0 0 17 16"><rect x=".6" y=".6" width="14.800" height="12.800" fill="#fff" stroke="#444" stroke-width="1.100"/><path d="M.6 4.800H15.400M.6 9H15.400M5.500 .6V13.400M10.500 .6V13.400" stroke="#777" stroke-width=".9"/><rect x="5.500" y="4.800" width="8.500" height="7.500" fill="#8fc0f2" stroke="#2b7cd3" stroke-width=".9"/><path d="M14.800 4.500L16.200 5.900L9.500 12.600L8 11.200Z" fill="#e6e6e6" stroke="#555" stroke-width=".8"/><path d="M8 11.200L9.500 12.600C8.500 14.800 6 15.200 4 14.800C6 14 6.300 12.200 8 11.200Z" fill="#2b7cd3"/></svg>
 <span style="left:305.4px;top:113.5px;font-size:12.5px;line-height:16px;color:#1f1f1f;letter-spacing:-0.44px;">Format as Table</span>
 <svg style="left:391px;top:119.5px" width="7" height="5" viewBox="0 0 7 5"><path d="M.7 .8L3.500 3.600L6.300 .8" stroke="#333" stroke-width="1.100" fill="none"/></svg>
 <svg style="left:285.3px;top:139.500px" width="17" height="16" viewBox="0 0 17 16"><rect x=".6" y=".6" width="14.800" height="12.800" fill="#fff" stroke="#444" stroke-width="1.100"/><path d="M.6 3.500H15.400" stroke="#777" stroke-width=".9"/><rect x="3.800" y="3.500" width="9.500" height="8" fill="#8fc0f2" stroke="#2b7cd3" stroke-width=".9"/><path d="M14.800 4.500L16.200 5.900L9.500 12.600L8 11.200Z" fill="#e6e6e6" stroke="#555" stroke-width=".8"/><path d="M8 11.200L9.500 12.600C8.500 14.800 6 15.200 4 14.800C6 14 6.300 12.200 8 11.200Z" fill="#2b7cd3"/></svg>
 <span style="left:305.4px;top:139.5px;font-size:12.5px;line-height:16px;color:#1f1f1f;letter-spacing:-0.586px;">Cell Styles</span>
 <svg style="left:361px;top:145.5px" width="7" height="5" viewBox="0 0 7 5"><path d="M.7 .8L3.500 3.600L6.300 .8" stroke="#333" stroke-width="1.100" fill="none"/></svg>
 <span style="left:350px;top:161.8px;font-size:11.5px;line-height:14px;color:#333;letter-spacing:-0.438px;">Styles</span>
 <svg style="left:469.8px;top:82.500px" width="29" height="28" viewBox="0 0 29 28"><path d="M7 1V3.500M22 1V3.500M7 2.200H22" stroke="#2b7cd3" stroke-width="1.100" fill="none"/><rect x=".6" y="6.600" width="27.800" height="20.800" fill="#fff"/><path d="M.6 13.500H28.400M.6 20.500H28.400M7.500 6.600V27.400M21.500 6.600V27.400" stroke="#9a9a9a" stroke-width="1" fill="none"/><rect x=".6" y="6.600" width="27.800" height="20.800" fill="none" stroke="#3a3a3a" stroke-width="1.200"/><rect x="7.500" y="13.500" width="14" height="7" fill="#7fb6ee" stroke="#2b7cd3" stroke-width="1.100"/></svg>
 <span style="left:471px;top:119.0px;font-size:12.5px;line-height:16px;color:#1f1f1f;letter-spacing:-0.619px;">Cells</span>
 <svg style="left:480.2px;top:140.1px" width="7" height="5" viewBox="0 0 7 5"><path d="M.7 .8L3.500 3.600L6.300 .8" stroke="#333" stroke-width="1.100" fill="none"/></svg>
 <svg style="left:523.5px;top:85px" width="30" height="30" viewBox="0 0 30 30"><circle cx="18.500" cy="11.500" r="10.500" stroke="#3a3a3a" stroke-width="1.200" fill="none"/><path d="M11 19L.8 29.200" stroke="#3a3a3a" stroke-width="1.200"/></svg>
 <span style="left:520px;top:119.0px;font-size:12.5px;line-height:16px;color:#1f1f1f;letter-spacing:-0.233px;">Editing</span>
 <svg style="left:535px;top:140.1px" width="7" height="5" viewBox="0 0 7 5"><path d="M.7 .8L3.500 3.600L6.300 .8" stroke="#333" stroke-width="1.100" fill="none"/></svg>
 <svg style="left:591.8px;top:85px" width="30" height="32" viewBox="0 0 30 32"><rect x="1.500" y="3.500" width="20" height="27" fill="#f1f1f1" stroke="#c6c6c6" stroke-width="1"/><g transform="rotate(-45 14 14)"><rect x="-1" y="9.500" width="17" height="9" rx="1" fill="#f1f1f1" stroke="#c2c2c2" stroke-width="1"/><rect x="2.500" y="12.300" width="10" height="3.400" rx=".8" fill="#fafafa" stroke="#c6c6c6" stroke-width=".9"/><rect x="17" y="7.500" width="8" height="13" rx="1" fill="#c4c4c4"/><rect x="19.800" y="7.500" width="1.600" height="13" fill="#e9e9e9"/><rect x="25" y="10.500" width="5.500" height="7" fill="#f1f1f1" stroke="#c2c2c2" stroke-width="1"/></g></svg>
 <span style="left:577.4px;top:120.7px;font-size:12.5px;line-height:16px;color:#b5b5b5;letter-spacing:-0.389px;">Sensitivity</span>
 <svg style="left:600px;top:143px" width="7" height="5" viewBox="0 0 7 5"><path d="M.7 .8L3.500 3.600L6.300 .8" stroke="#c2c2c2" stroke-width="1.100" fill="none"/></svg>
 <span style="left:578px;top:161.8px;font-size:11.5px;line-height:14px;color:#333;letter-spacing:-0.089px;">Sensitivity</span>
 <div style="left:636px;top:79px;width:24px;height:99.500px;background:#fff;border:1px solid #8d8d8d"></div>
 <svg style="left:645.5px;top:124.500px" width="5" height="7" viewBox="0 0 5 7"><path d="M.8 .7L3.600 3.500L.8 6.300" stroke="#333" stroke-width="1.100" fill="none"/></svg>
 <svg style="left:668px;top:162px" width="11" height="7" viewBox="0 0 11 7"><path d="M.8 .8L5.500 5.500L10.200 .8" stroke="#333" stroke-width="1.200" fill="none"/></svg>
 <div style="left:8.5px;top:187px;width:101px;height:25.500px;background:#fff;border:1px solid #d6d6d6;border-radius:5px"></div>
 <div style="left:130.5px;top:187px;width:85px;height:25.500px;background:#fff;border:1px solid #d6d6d6;border-radius:5px"></div>
 <div style="left:220.3px;top:187px;width:467px;height:25.500px;background:#fff;border:1px solid #d6d6d6;border-radius:5px"></div>
 <span style="left:15.2px;top:192.3px;font-size:12.5px;line-height:16px;color:#1f1f1f;letter-spacing:-0.317px;">B22</span>
 <svg style="left:93px;top:197px" width="11" height="7" viewBox="0 0 11 7"><path d="M.8 .8L5.500 5.500L10.200 .8" stroke="#333" stroke-width="1.200" fill="none"/></svg>
 <svg style="left:118.5px;top:194px" width="3" height="12" viewBox="0 0 3 12"><g fill="#333"><circle cx="1.500" cy="1.500" r="1.100"/><circle cx="1.500" cy="6" r="1.100"/><circle cx="1.500" cy="10.500" r="1.100"/></g></svg>
 <svg style="left:137px;top:194.500px" width="12" height="12" viewBox="0 0 12 12"><path d="M.8 .8L11.200 11.200M11.200 .8L.8 11.200" stroke="#bdbdbd" stroke-width="1.100"/></svg>
 <svg style="left:158.5px;top:194.500px" width="16" height="12" viewBox="0 0 16 12"><path d="M.8 7L5 11.200L15.200 .8" stroke="#bdbdbd" stroke-width="1.100" fill="none"/></svg>
 <span style="left:184.5px;top:190px;font-family:'Liberation Serif',serif;font-style:italic;font-size:17px;line-height:20px;color:#222;letter-spacing:-.5px">fx</span>
 <svg style="left:203.5px;top:197.500px" width="10" height="6" viewBox="0 0 10 6"><path d="M.7 .7L5 5L9.300 .7" stroke="#bdbdbd" stroke-width="1.100" fill="none"/></svg>
 <svg style="left:672.5px;top:196px" width="11" height="7" viewBox="0 0 11 7"><path d="M.8 .8L5.500 5.500L10.200 .8" stroke="#333" stroke-width="1.200" fill="none"/></svg>
 <div style="left:25.7px;top:239.500px;width:648.5px;height:737.500px;background:#fff"></div>
 <svg style="left:10.5px;top:225px" width="11" height="11" viewBox="0 0 11 11"><path d="M11 0V11H0Z" fill="#dadada"/></svg>
 <span style="left:135.8px;top:222.0px;font-size:12.5px;line-height:16px;color:#444;letter-spacing:-0.344px;">A</span>
 <span style="left:342px;top:222.0px;font-size:12.5px;line-height:16px;color:#444;letter-spacing:-0.344px;">B</span>
 <span style="left:509px;top:222.0px;font-size:12.5px;line-height:16px;color:#444;letter-spacing:-1.031px;">C</span>
 <span style="left:646px;top:222.0px;font-size:12.5px;line-height:16px;color:#444;letter-spacing:-1.031px;">D</span>
 <div style="left:253.4px;top:222px;width:1px;height:17px;background:#dcdcdc"></div>
 <div style="left:438.4px;top:222px;width:1px;height:17px;background:#dcdcdc"></div>
 <div style="left:586.4px;top:222px;width:1px;height:17px;background:#dcdcdc"></div>
 <div style="left:25.7px;top:494.5px;width:648.5px;height:20px;background:#e8e8e8"></div>
 <div style="left:25.7px;top:314px;width:648.5px;height:20.500px;background:#e97132"></div>
 <div style="left:1px;top:264px;width:673.2px;height:1px;background:#e1e1e1"></div>
 <div style="left:1px;top:289px;width:673.2px;height:1px;background:#e1e1e1"></div>
 <div style="left:1px;top:354px;width:673.2px;height:1px;background:#e1e1e1"></div>
 <div style="left:1px;top:374px;width:673.2px;height:1px;background:#e1e1e1"></div>
 <div style="left:1px;top:394px;width:673.2px;height:1px;background:#e1e1e1"></div>
 <div style="left:1px;top:414px;width:673.2px;height:1px;background:#e1e1e1"></div>
 <div style="left:1px;top:434px;width:673.2px;height:1px;background:#e1e1e1"></div>
 <div style="left:1px;top:454px;width:673.2px;height:1px;background:#e1e1e1"></div>
 <div style="left:1px;top:474px;width:673.2px;height:1px;background:#e1e1e1"></div>
 <div style="left:1px;top:494px;width:673.2px;height:1px;background:#e1e1e1"></div>
 <div style="left:1px;top:514px;width:673.2px;height:1px;background:#e1e1e1"></div>
 <div style="left:1px;top:534px;width:673.2px;height:1px;background:#e1e1e1"></div>
 <div style="left:1px;top:554px;width:673.2px;height:1px;background:#e1e1e1"></div>
 <div style="left:1px;top:574px;width:673.2px;height:1px;background:#e1e1e1"></div>
 <div style="left:1px;top:594px;width:673.2px;height:1px;background:#e1e1e1"></div>
 <div style="left:1px;top:614px;width:673.2px;height:1px;background:#e1e1e1"></div>
 <div style="left:1px;top:634px;width:673.2px;height:1px;background:#e1e1e1"></div>
 <div style="left:1px;top:654px;width:673.2px;height:1px;background:#e1e1e1"></div>
 <div style="left:1px;top:674px;width:673.2px;height:1px;background:#e1e1e1"></div>
 <div style="left:1px;top:694px;width:673.2px;height:1px;background:#e1e1e1"></div>
 <div style="left:1px;top:714px;width:673.2px;height:1px;background:#e1e1e1"></div>
 <div style="left:1px;top:734px;width:673.2px;height:1px;background:#e1e1e1"></div>
 <div style="left:1px;top:754px;width:673.2px;height:1px;background:#e1e1e1"></div>
 <div style="left:1px;top:774px;width:673.2px;height:1px;background:#e1e1e1"></div>
 <div style="left:1px;top:794px;width:673.2px;height:1px;background:#e1e1e1"></div>
 <div style="left:1px;top:814px;width:673.2px;height:1px;background:#e1e1e1"></div>
 <div style="left:1px;top:834px;width:673.2px;height:1px;background:#e1e1e1"></div>
 <div style="left:1px;top:854px;width:673.2px;height:1px;background:#e1e1e1"></div>
 <div style="left:1px;top:874px;width:673.2px;height:1px;background:#e1e1e1"></div>
 <div style="left:1px;top:894px;width:673.2px;height:1px;background:#e1e1e1"></div>
 <div style="left:1px;top:914px;width:673.2px;height:1px;background:#e1e1e1"></div>
 <div style="left:1px;top:934px;width:673.2px;height:1px;background:#e1e1e1"></div>
 <div style="left:1px;top:954px;width:673.2px;height:1px;background:#e1e1e1"></div>
 <div style="left:1px;top:974px;width:673.2px;height:1px;background:#e1e1e1"></div>
 <div style="left:253.4px;top:239.5px;width:1px;height:74.5px;background:#e1e1e1"></div>
 <div style="left:253.4px;top:334.2px;width:1px;height:160.3px;background:#e1e1e1"></div>
 <div style="left:253.4px;top:514.5px;width:1px;height:462.5px;background:#e1e1e1"></div>
 <div style="left:438.4px;top:239.5px;width:1px;height:74.5px;background:#e1e1e1"></div>
 <div style="left:438.4px;top:334.2px;width:1px;height:160.3px;background:#e1e1e1"></div>
 <div style="left:438.4px;top:514.5px;width:1px;height:462.5px;background:#e1e1e1"></div>
 <div style="left:586.4px;top:239.5px;width:1px;height:74.5px;background:#e1e1e1"></div>
 <div style="left:586.4px;top:334.2px;width:1px;height:160.3px;background:#e1e1e1"></div>
 <div style="left:586.4px;top:514.5px;width:1px;height:462.5px;background:#e1e1e1"></div>
 <div style="left:25.7px;top:238.800px;width:648.5px;height:1.200px;background:#9a9a9a"></div>
 <div style="left:25.2px;top:239px;width:1px;height:738px;background:#b5b5b5"></div>
 <span style="left:8.9px;top:245.5px;font-size:12.5px;line-height:16px;color:#444;letter-spacing:-0.153px;">1</span>
 <span style="left:8.9px;top:270.5px;font-size:12.5px;line-height:16px;color:#444;letter-spacing:-0.153px;">2</span>
 <span style="left:8.9px;top:295.5px;font-size:12.5px;line-height:16px;color:#444;letter-spacing:-0.153px;">3</span>
 <span style="left:8.9px;top:318.0px;font-size:12.5px;line-height:16px;color:#444;letter-spacing:-0.153px;">4</span>
 <span style="left:8.9px;top:338.0px;font-size:12.5px;line-height:16px;color:#444;letter-spacing:-0.153px;">5</span>
 <span style="left:8.9px;top:358.0px;font-size:12.5px;line-height:16px;color:#444;letter-spacing:-0.153px;">6</span>
 <span style="left:8.9px;top:378.0px;font-size:12.5px;line-height:16px;color:#444;letter-spacing:-0.153px;">7</span>
 <span style="left:8.9px;top:398.0px;font-size:12.5px;line-height:16px;color:#444;letter-spacing:-0.153px;">8</span>
 <span style="left:8.9px;top:418.0px;font-size:12.5px;line-height:16px;color:#444;letter-spacing:-0.153px;">9</span>
 <span style="left:5.8px;top:438.0px;font-size:12.5px;line-height:16px;color:#444;letter-spacing:-0.153px;">10</span>
 <span style="left:5.8px;top:458.0px;font-size:12.5px;line-height:16px;color:#444;letter-spacing:0.308px;">11</span>
 <span style="left:5.8px;top:478.0px;font-size:12.5px;line-height:16px;color:#444;letter-spacing:-0.153px;">12</span>
 <span style="left:5.8px;top:498.0px;font-size:12.5px;line-height:16px;color:#444;letter-spacing:-0.153px;">13</span>
 <span style="left:5.8px;top:518.0px;font-size:12.5px;line-height:16px;color:#444;letter-spacing:-0.153px;">14</span>
 <span style="left:5.8px;top:538.0px;font-size:12.5px;line-height:16px;color:#444;letter-spacing:-0.153px;">15</span>
 <span style="left:5.8px;top:558.0px;font-size:12.5px;line-height:16px;color:#444;letter-spacing:-0.153px;">16</span>
 <span style="left:5.8px;top:578.0px;font-size:12.5px;line-height:16px;color:#444;letter-spacing:-0.153px;">17</span>
 <span style="left:5.8px;top:598.0px;font-size:12.5px;line-height:16px;color:#444;letter-spacing:-0.153px;">18</span>
 <span style="left:5.8px;top:618.0px;font-size:12.5px;line-height:16px;color:#444;letter-spacing:-0.153px;">19</span>
 <span style="left:5.8px;top:638.0px;font-size:12.5px;line-height:16px;color:#444;letter-spacing:-0.153px;">20</span>
 <span style="left:5.8px;top:658.0px;font-size:12.5px;line-height:16px;color:#444;letter-spacing:-0.153px;">21</span>
 <span style="left:5.8px;top:678.0px;font-size:12.5px;line-height:16px;color:#444;letter-spacing:-0.153px;">22</span>
 <span style="left:5.8px;top:698.0px;font-size:12.5px;line-height:16px;color:#444;letter-spacing:-0.153px;">23</span>
 <span style="left:5.8px;top:718.0px;font-size:12.5px;line-height:16px;color:#444;letter-spacing:-0.153px;">24</span>
 <span style="left:5.8px;top:738.0px;font-size:12.5px;line-height:16px;color:#444;letter-spacing:-0.153px;">25</span>
 <span style="left:5.8px;top:758.0px;font-size:12.5px;line-height:16px;color:#444;letter-spacing:-0.153px;">26</span>
 <span style="left:5.8px;top:778.0px;font-size:12.5px;line-height:16px;color:#444;letter-spacing:-0.153px;">27</span>
 <span style="left:5.8px;top:798.0px;font-size:12.5px;line-height:16px;color:#444;letter-spacing:-0.153px;">28</span>
 <span style="left:5.8px;top:818.0px;font-size:12.5px;line-height:16px;color:#444;letter-spacing:-0.153px;">29</span>
 <span style="left:5.8px;top:838.0px;font-size:12.5px;line-height:16px;color:#444;letter-spacing:-0.153px;">30</span>
 <span style="left:5.8px;top:858.0px;font-size:12.5px;line-height:16px;color:#444;letter-spacing:-0.153px;">31</span>
 <span style="left:5.8px;top:878.0px;font-size:12.5px;line-height:16px;color:#444;letter-spacing:-0.153px;">32</span>
 <span style="left:5.8px;top:898.0px;font-size:12.5px;line-height:16px;color:#444;letter-spacing:-0.153px;">33</span>
 <span style="left:5.8px;top:918.0px;font-size:12.5px;line-height:16px;color:#444;letter-spacing:-0.153px;">34</span>
 <span style="left:5.8px;top:938.0px;font-size:12.5px;line-height:16px;color:#444;letter-spacing:-0.153px;">35</span>
 <span style="left:5.8px;top:958.0px;font-size:12.5px;line-height:16px;color:#444;letter-spacing:-0.153px;">36</span>
 <span style="left:29.5px;top:242.6px;font-size:16.3px;line-height:20px;font-weight:700;color:#262626;letter-spacing:-0.365px;">HAA INCENTIVE PAYMENTS</span>
 <span style="left:29.5px;top:267.6px;font-size:16.3px;line-height:20px;font-weight:700;color:#262626;letter-spacing:0.111px;white-space:pre;">PAYROLL DATE:  3/27/2026</span>
 <span style="left:86.5px;top:317.0px;font-size:12.5px;line-height:16px;font-weight:700;color:#fff;letter-spacing:-0.235px;">EMPLOYEE NAME</span>
 <span style="left:314.3px;top:317.0px;font-size:12.5px;line-height:16px;font-weight:700;color:#fff;letter-spacing:0.133px;">COMPANY</span>
 <span style="left:442.2px;top:317.0px;font-size:12.5px;line-height:16px;font-weight:700;color:#fff;letter-spacing:-0.037px;">INCENTIVE TO BE PAID</span>
 <div style="left:587px;top:315px;width:87.2px;height:20px;overflow:hidden">
 <span style="left:3.3px;top:2.0px;font-size:12.5px;line-height:16px;font-weight:700;color:#fff;letter-spacing:-0.036px;">INCENTIVE PERIOD</span>
 </div>
 <span style="left:28.5px;top:336.7px;font-size:13px;line-height:17px;color:#111;letter-spacing:-0.024px;">Bruce, Jeremy</span>
 <span style="left:256.4px;top:336.7px;font-size:13px;line-height:17px;color:#111;letter-spacing:0.245px;">HAA Commercial</span>
 <span style="left:445.5px;top:336.7px;font-size:13px;line-height:17px;color:#111;letter-spacing:0.066px;">$</span>
 <span style="left:528.1px;top:336.7px;font-size:13px;line-height:17px;color:#111;letter-spacing:-0.076px;">2,500.00</span>
 <span style="left:631.3px;top:336.7px;font-size:13px;line-height:17px;color:#111;letter-spacing:0.307px;">3/1/26</span>
 <span style="left:28.5px;top:356.7px;font-size:13px;line-height:17px;color:#111;letter-spacing:0.485px;">Dulapa, Michael</span>
 <span style="left:256.4px;top:356.7px;font-size:13px;line-height:17px;color:#111;letter-spacing:0.245px;">HAA Commercial</span>
 <span style="left:445.5px;top:356.7px;font-size:13px;line-height:17px;color:#111;letter-spacing:0.066px;">$</span>
 <span style="left:528.1px;top:356.7px;font-size:13px;line-height:17px;color:#111;letter-spacing:-0.076px;">6,738.55</span>
 <span style="left:631.3px;top:356.7px;font-size:13px;line-height:17px;color:#111;letter-spacing:0.307px;">3/1/26</span>
 <span style="left:28.5px;top:376.7px;font-size:13px;line-height:17px;color:#111;letter-spacing:0.232px;">Ellis, Joseph</span>
 <span style="left:256.4px;top:376.7px;font-size:13px;line-height:17px;color:#111;letter-spacing:0.245px;">HAA Commercial</span>
 <span style="left:445.5px;top:376.7px;font-size:13px;line-height:17px;color:#111;letter-spacing:0.066px;">$</span>
 <span style="left:528.1px;top:376.7px;font-size:13px;line-height:17px;color:#111;letter-spacing:-0.076px;">2,500.00</span>
 <span style="left:631.3px;top:376.7px;font-size:13px;line-height:17px;color:#111;letter-spacing:0.307px;">3/1/26</span>
 <span style="left:28.5px;top:396.7px;font-size:13px;line-height:17px;color:#111;letter-spacing:0.042px;">Evans, Katie</span>
 <span style="left:256.4px;top:396.7px;font-size:13px;line-height:17px;color:#111;letter-spacing:0.245px;">HAA Commercial</span>
 <span style="left:445.5px;top:396.7px;font-size:13px;line-height:17px;color:#111;letter-spacing:0.066px;">$</span>
 <span style="left:528.1px;top:396.7px;font-size:13px;line-height:17px;color:#111;letter-spacing:-0.076px;">2,500.00</span>
 <span style="left:631.3px;top:396.7px;font-size:13px;line-height:17px;color:#111;letter-spacing:0.307px;">3/1/26</span>
 <span style="left:28.5px;top:416.7px;font-size:13px;line-height:17px;color:#111;letter-spacing:0.298px;">Jeffrey, Kimberly (Nikki)</span>
 <span style="left:256.4px;top:416.7px;font-size:13px;line-height:17px;color:#111;letter-spacing:0.245px;">HAA Commercial</span>
 <span style="left:445.5px;top:416.7px;font-size:13px;line-height:17px;color:#111;letter-spacing:0.066px;">$</span>
 <span style="left:528.1px;top:416.7px;font-size:13px;line-height:17px;color:#111;letter-spacing:-0.076px;">1,400.00</span>
 <span style="left:631.3px;top:416.7px;font-size:13px;line-height:17px;color:#111;letter-spacing:0.307px;">3/1/26</span>
 <span style="left:28.5px;top:436.7px;font-size:13px;line-height:17px;color:#111;letter-spacing:0.367px;">Morche', Tiffany</span>
 <span style="left:256.4px;top:436.7px;font-size:13px;line-height:17px;color:#111;letter-spacing:0.245px;">HAA Commercial</span>
 <span style="left:445.5px;top:436.7px;font-size:13px;line-height:17px;color:#111;letter-spacing:0.066px;">$</span>
 <span style="left:528.1px;top:436.7px;font-size:13px;line-height:17px;color:#111;letter-spacing:-0.076px;">1,100.00</span>
 <span style="left:631.3px;top:436.7px;font-size:13px;line-height:17px;color:#111;letter-spacing:0.307px;">3/1/26</span>
 <span style="left:28.5px;top:456.7px;font-size:13px;line-height:17px;color:#111;letter-spacing:0.03px;">Myers, Gregory</span>
 <span style="left:256.4px;top:456.7px;font-size:13px;line-height:17px;color:#111;letter-spacing:0.245px;">HAA Commercial</span>
 <span style="left:445.5px;top:456.7px;font-size:13px;line-height:17px;color:#111;letter-spacing:0.066px;">$</span>
 <span style="left:528.1px;top:456.7px;font-size:13px;line-height:17px;color:#111;letter-spacing:-0.076px;">1,100.00</span>
 <span style="left:631.3px;top:456.7px;font-size:13px;line-height:17px;color:#111;letter-spacing:0.307px;">3/1/26</span>
 <span style="left:28.5px;top:476.7px;font-size:13px;line-height:17px;color:#111;letter-spacing:0.456px;">Shooshanian, Barbara</span>
 <span style="left:256.4px;top:476.7px;font-size:13px;line-height:17px;color:#111;letter-spacing:0.247px;">HAA Commercial &amp; Medicare</span>
 <span style="left:445.5px;top:476.7px;font-size:13px;line-height:17px;color:#111;letter-spacing:0.066px;">$</span>
 <span style="left:528.1px;top:476.7px;font-size:13px;line-height:17px;color:#111;letter-spacing:-0.076px;">2,500.00</span>
 <span style="left:631.3px;top:476.7px;font-size:13px;line-height:17px;color:#111;letter-spacing:0.307px;">3/1/26</span>
 <span style="left:28.5px;top:516.7px;font-size:13px;line-height:17px;color:#111;letter-spacing:0.137px;">Garrett, Kayti</span>
 <span style="left:256.4px;top:516.7px;font-size:13px;line-height:17px;color:#111;letter-spacing:0.117px;">HAA Medicare</span>
 <span style="left:445.5px;top:516.7px;font-size:13px;line-height:17px;color:#111;letter-spacing:0.066px;">$</span>
 <span style="left:539.6px;top:516.7px;font-size:13px;line-height:17px;color:#111;letter-spacing:-0.211px;">800.00</span>
 <span style="left:631.3px;top:516.7px;font-size:13px;line-height:17px;color:#111;letter-spacing:0.307px;">2/1/26</span>
 <span style="left:28.5px;top:536.7px;font-size:13px;line-height:17px;color:#111;letter-spacing:0.24px;">Taylor, Lacey</span>
 <span style="left:256.4px;top:536.7px;font-size:13px;line-height:17px;color:#111;letter-spacing:0.117px;">HAA Medicare</span>
 <span style="left:445.5px;top:536.7px;font-size:13px;line-height:17px;color:#111;letter-spacing:0.066px;">$</span>
 <span style="left:539.6px;top:536.7px;font-size:13px;line-height:17px;color:#111;letter-spacing:-0.211px;">600.00</span>
 <span style="left:631.3px;top:536.7px;font-size:13px;line-height:17px;color:#111;letter-spacing:0.307px;">2/1/26</span>
 <span style="left:28.5px;top:556.7px;font-size:13px;line-height:17px;color:#111;letter-spacing:0.368px;">Wehrmann, Deanne</span>
 <span style="left:256.4px;top:556.7px;font-size:13px;line-height:17px;color:#111;letter-spacing:0.117px;">HAA Medicare</span>
 <span style="left:445.5px;top:556.7px;font-size:13px;line-height:17px;color:#111;letter-spacing:0.066px;">$</span>
 <span style="left:528.1px;top:556.7px;font-size:13px;line-height:17px;color:#111;letter-spacing:-0.076px;">1,600.00</span>
 <span style="left:631.3px;top:556.7px;font-size:13px;line-height:17px;color:#111;letter-spacing:0.307px;">2/1/26</span>
 <div style="left:677px;top:221px;width:16.500px;height:757px;background:#f5f5f5;border-radius:8px"></div>
 <svg style="left:681px;top:225px" width="9" height="7" viewBox="0 0 9 7"><path d="M4.500 .3L9 6.700H0Z" fill="#707070"/></svg>
 <div style="left:681.2px;top:236.700px;width:8.600px;height:708px;border-radius:4.300px;background:#707070"></div>
 <svg style="left:681px;top:967px" width="9" height="7" viewBox="0 0 9 7"><path d="M4.500 6.700L9 .3H0Z" fill="#707070"/></svg>
 <svg style="left:28.5px;top:987px" width="7" height="11" viewBox="0 0 7 11"><path d="M6 .8L1.300 5.500L6 10.200" stroke="#b9b9b9" stroke-width="1.100" fill="none"/></svg>
 <svg style="left:60.5px;top:987px" width="7" height="11" viewBox="0 0 7 11"><path d="M1 .8L5.700 5.500L1 10.200" stroke="#333" stroke-width="1.100" fill="none"/></svg>
 <span style="left:123.9px;top:984.0px;font-size:13.5px;line-height:18px;color:#1f1f1f;letter-spacing:0.034px;">PAYDATE 1-16-26</span>
 <div style="left:246.7px;top:984px;width:1px;height:18px;background:#d5d5d5"></div>
 <div style="left:261px;top:983px;width:79px;height:20px;overflow:hidden">
 <span style="left:0.3px;top:1.0px;font-size:13.5px;line-height:18px;color:#1f1f1f;letter-spacing:0.034px;">PAYDATE 2-27-26</span>
 </div>
 <svg style="left:350px;top:991px" width="11" height="3" viewBox="0 0 11 3"><g fill="#333"><circle cx="1.500" cy="1.500" r="1.200"/><circle cx="5.500" cy="1.500" r="1.200"/><circle cx="9.500" cy="1.500" r="1.200"/></g></svg>
 <svg style="left:381px;top:987px" width="12" height="12" viewBox="0 0 12 12"><path d="M6 .5V11.500M.5 6H11.500" stroke="#333" stroke-width="1.100"/></svg>
 <svg style="left:418.5px;top:988px" width="3" height="11" viewBox="0 0 3 11"><g fill="#333"><circle cx="1.500" cy="1.500" r="1"/><circle cx="1.500" cy="5.500" r="1"/><circle cx="1.500" cy="9.500" r="1"/></g></svg>
 <div style="left:436px;top:984.500px;width:241px;height:16.500px;background:#f6f6f6;border-radius:8px"></div>
 <svg style="left:441.5px;top:988.500px" width="7" height="9" viewBox="0 0 7 9"><path d="M.3 4.500L6.700 0V9Z" fill="#707070"/></svg>
 <div style="left:452.7px;top:988.400px;width:118.500px;height:8.800px;border-radius:4.400px;background:#707070"></div>
 <svg style="left:664.5px;top:988.500px" width="7" height="9" viewBox="0 0 7 9"><path d="M6.700 4.500L.3 0V9Z" fill="#707070"/></svg>
 <div style="left:0;top:1009px;width:697px;height:22px;background:#f3f3f3"></div>
 <span style="left:10.9px;top:1013.5px;font-size:11.5px;line-height:14px;color:#333;letter-spacing:-0.47px;">Ready</span>
 <svg style="left:61.5px;top:1014px" width="15" height="13" viewBox="0 0 15 13"><g stroke="#444" stroke-width="1" fill="none"><rect x=".5" y=".5" width="13" height="11"/><path d="M.5 3.500H13.500M3 6H7M3 8.500H6"/><circle cx="10.500" cy="8.500" r="2.800" fill="#f3f3f3"/><circle cx="10.500" cy="8.500" r="1" fill="#444"/></g></svg>
 <svg style="left:93px;top:1012.500px" width="15" height="15" viewBox="0 0 15 15"><g stroke="#333" stroke-width="1" fill="none"><circle cx="6" cy="2.200" r="1.500"/><path d="M.8 5.200C4 6.500 8 6.500 11.200 5.200M4 6V9.500L2 14M8 6V9.500L9 11"/><path d="M9.500 9.500L14 14M14 9.500L9.500 14"/></g></svg>
 <span style="left:112.6px;top:1013.3px;font-size:11.3px;line-height:14px;font-weight:700;color:#222;letter-spacing:-0.385px;">Accessibility: Investigate</span>
 <div style="left:384.5px;top:1010px;width:40px;height:21.500px;background:#e1e1e1"></div>
 <svg style="left:397px;top:1013.500px" width="14" height="13" viewBox="0 0 14 13"><g stroke="#222" stroke-width="1" fill="none"><rect x=".5" y=".5" width="13" height="12"/><path d="M.5 4.500H13.500M.5 8.500H13.500M4.800 .5V12.500M9.200 .5V12.500"/></g></svg>
 <svg style="left:437.5px;top:1013.500px" width="15" height="13" viewBox="0 0 15 13"><g stroke="#222" stroke-width="1" fill="none"><rect x=".5" y=".5" width="14" height="12" rx="1"/><rect x="3.500" y="3" width="8" height="7"/><path d="M5 5.200H10M5 7.500H10"/></g></svg>
 <svg style="left:477.5px;top:1013.500px" width="15" height="13" viewBox="0 0 15 13"><g stroke="#222" stroke-width="1" fill="none"><rect x=".5" y=".5" width="14" height="12"/><path d="M4.500 .5V6.500H10.500V.5"/></g></svg>
 <div style="left:511.5px;top:1019.500px;width:7px;height:1px;background:#444"></div>
 <div style="left:523.8px;top:1019.500px;width:99.500px;height:1px;background:#777"></div>
 <div style="left:572.2px;top:1014.500px;width:4px;height:11px;background:#555"></div>
 <svg style="left:628.5px;top:1016px" width="8" height="8" viewBox="0 0 8 8"><path d="M4 .3V7.700M.3 4H7.700" stroke="#444" stroke-width="1"/></svg>
 <span style="left:650.3px;top:1013.3px;font-size:11px;line-height:14px;color:#333;letter-spacing:-0.36px;">100%</span>
 <div style="left:0;top:1px;width:22px;height:1030px;background:linear-gradient(90deg,rgba(0,0,0,.185) 0,rgba(0,0,0,.075) 25%,rgba(0,0,0,.022) 55%,rgba(0,0,0,0) 100%)"></div>
 <div style="left:695.300px;top:1px;width:.7px;height:1030px;background:#fff"></div>
 <div style="left:696px;top:0;width:1px;height:1032px;background:#7a7a7a"></div>
 <div style="left:0;top:1031px;width:697px;height:1px;background:#8a8a8a"></div>
</div>
<!-- ====================== TASKBAR ====================== -->
<div id="taskbar">
 <svg style="left:19px;top:16px" width="25" height="19" viewBox="0 0 25 19"><path d="M6 18.500A5 5 0 0 1 6 8.500A7 7 0 0 1 19 7.500A5.500 5.500 0 0 1 19 18.500Z" fill="#c9d8f2"/><path d="M5 18.500A4 4 0 0 1 5 11.500A6 6 0 0 1 16 11A4 4 0 0 1 18 18.500Z" fill="#a9c1ec"/></svg>
 <div style="left:29.500px;top:6.7px;width:16px;height:16px;border-radius:50%;background:#c42b1c"></div>
 <span style="left:35.2px;top:7.8px;font-size:11px;line-height:14px;color:#fff;letter-spacing:-1.125px">1</span>
 <span style="left:50.7px;top:8.3px;font-size:12.5px;line-height:16px;color:#1a1a1a;letter-spacing:-0.812px">36°F</span>
 <span style="left:50.7px;top:24.0px;font-size:12.5px;line-height:16px;color:#5a5a5a;letter-spacing:-0.056px">Mostly cloudy</span>
 <div style="left:550.8px;top:13px;width:11.300px;height:11.300px;background:#35b1f3"></div>
 <div style="left:562.8px;top:13px;width:11.300px;height:11.300px;background:#1e98ea"></div>
 <div style="left:550.8px;top:25px;width:11.300px;height:11.300px;background:#1a90e4"></div>
 <div style="left:562.8px;top:25px;width:11.300px;height:11.300px;background:#0a74d2"></div>
 <div style="left:587.500px;top:8.5px;width:219px;height:31px;border-radius:15.500px;background:#fafafa;border:1px solid #d6d6d6"></div>
 <svg style="left:598.500px;top:16.5px" width="15" height="15" viewBox="0 0 15 15"><circle cx="6.300" cy="6.300" r="5.200" stroke="#222" stroke-width="1.600" fill="none"/><path d="M10 10L14.200 14.200" stroke="#222" stroke-width="1.800"/></svg>
 <span style="left:624.3px;top:15.3px;font-size:14px;line-height:18px;color:#555;letter-spacing:-0.693px">Search</span>
 <div style="left:826px;top:13px;width:16.500px;height:15px;background:linear-gradient(135deg,#fdfdfd,#d4d4d4);border-radius:1.500px;box-shadow:0 0 0 .6px #c9c9c9"></div>
 <div style="left:819px;top:18.5px;width:18.500px;height:16.500px;background:#1f1f1f;border-radius:1.500px"></div>
 <svg style="left:863px;top:13px" width="25" height="22" viewBox="0 0 25 22"><path d="M0 2A1.500 1.500 0 0 1 1.500 .5H8L10.500 3H23A1.500 1.500 0 0 1 24.500 4.500V8H0Z" fill="#e8a616"/><rect x="0" y="4.500" width="24.500" height="17" rx="1.500" fill="#fcd245"/><path d="M0 14H24.500V20A1.500 1.500 0 0 1 23 21.500H1.500A1.500 1.500 0 0 1 0 20Z" fill="#f5bd25"/><path d="M5 21.500V17.500A1.500 1.500 0 0 1 6.500 16H18A1.500 1.500 0 0 1 19.500 17.500V21.500Z" fill="#1a7fd4"/></svg>
 <svg style="left:906.500px;top:11.5px" width="25" height="25" viewBox="0 0 25 25"><circle cx="12.500" cy="12.500" r="12" fill="#1b86d9"/><path d="M3 8C6 1 16 -1 22 5C25 9 24.500 13 22.500 15.500C20 17 14 17 13.500 13.500C16 13 17.500 11 16 8.500C13 5 6 5.500 3 8Z" fill="#4cd27a"/><path d="M1 14C2 20 8 25 15 24C19 23 21 21 22.500 18C18 20 11 20 9.500 15C8.500 11 11 8.500 14 8.500C9 6 2 8 1 14Z" fill="#0c59a4"/><rect x="1.500" y="15.500" width="11" height="8" rx="1" fill="#b5651d"/><rect x="5" y="13.800" width="4" height="2.500" rx=".8" fill="none" stroke="#8a4a12" stroke-width="1"/><rect x="1.500" y="18.500" width="11" height="1" fill="#8a4a12"/></svg>
 <div style="left:943.300px;top:4.3px;width:39.700px;height:39.500px;border-radius:4.500px;background:#efb1af"></div>
 <svg style="left:950.500px;top:13.5px" width="25" height="24" viewBox="0 0 25 24"><circle cx="17.500" cy="4.500" r="3.500" fill="#7b83eb"/><circle cx="10" cy="3.800" r="3.800" fill="#7b83eb"/><rect x="13" y="9" width="11.500" height="12" rx="3" fill="#5059c9"/><rect x="5" y="9" width="14" height="14.500" rx="3" fill="#7b83eb"/><rect x="0" y="9.500" width="10.500" height="10.500" rx="1.500" fill="#4b53bc"/><text x="5.200" y="17.800" font-family="Liberation Sans, sans-serif" font-weight="700" font-size="8" fill="#fff" text-anchor="middle">T</text></svg>
 <div style="left:964.500px;top:6.8px;width:16px;height:16px;border-radius:50%;background:#c42b1c"></div>
 <span style="left:970.2px;top:7.9px;font-size:11px;line-height:14px;color:#fff;letter-spacing:-1.125px">1</span>
 <div style="left:947.500px;top:40px;width:31px;height:3px;border-radius:1.500px;background:#c42b1c"></div>
 <svg style="left:996px;top:12px" width="24" height="25" viewBox="0 0 24 25"><path d="M1 2.500L15 1V14L1 15.500Z" fill="#1e4fc0"/><path d="M2 3.500L14 2.200V13L2 14.500Z" fill="#3f7df0"/><path d="M15 1L18 3V15L15 14Z" fill="#9fb7d8"/><path d="M4 16L13 15L15 18.500L5 20Z" fill="#b8c2cc"/><circle cx="18" cy="18.500" r="5.500" fill="#dfe3e6" stroke="#8e979e" stroke-width=".8"/><path d="M15.500 18.500L18 16.500M15.500 18.500L18 20.500M20.500 16.500L18.500 18.500L20.500 20.500" stroke="#1e8a3a" stroke-width="1.200" fill="none"/></svg>
 <svg style="left:1039px;top:12px" width="24" height="24" viewBox="0 0 24 24"><circle cx="12" cy="12" r="10.800" stroke="#1769c8" stroke-width="2.200" fill="#fff"/><path d="M18.300 8.500A7 7 0 1 0 18.300 15.500" stroke="#1769c8" stroke-width="3" fill="none"/><path d="M12 12H23" stroke="#1769c8" stroke-width="2"/></svg>
 <div style="left:1079px;top:5px;width:35px;height:38px;border-radius:4.500px;background:#f6f6f6;border:1px solid #e4e4e4"></div>
 <div style="left:1076px;top:5px;width:34.500px;height:38px;border-radius:4.500px;background:#f8f8f8;border:1px solid #e6e6e6"></div>
 <svg style="left:1082.500px;top:11.5px" width="25" height="25" viewBox="0 0 25 25"><circle cx="12.500" cy="12.500" r="12" fill="#fbc116"/><path d="M12.500 12.500L2.100 6.500A12 12 0 0 1 22.900 6.500Z" fill="#e33b2e"/><path d="M12.500 12.500L2.100 6.500A12 12 0 0 0 10.500 24.300L15.500 15.500Z" fill="#2ba24c"/><path d="M12.500 7H23.200A12 12 0 0 0 1.800 7Z" fill="#e33b2e"/><circle cx="12.500" cy="12.500" r="5.600" fill="#fff"/><circle cx="12.500" cy="12.500" r="4.500" fill="#4688f4"/></svg>
 <div style="left:1087px;top:40px;width:15.500px;height:3px;border-radius:1.500px;background:#0a6cc8"></div>
 <svg style="left:1126px;top:13px" width="25" height="23" viewBox="0 0 25 23"><path d="M5 8L14 1.500A2 2 0 0 1 16.300 1.500L24 7V19A2.500 2.500 0 0 1 21.500 21.500H7.500A2.500 2.500 0 0 1 5 19Z" fill="#1a8be0"/><path d="M8 5L21.500 5.500L24 7.500L11 17Z" fill="#5cc4f7"/><path d="M5 11L24 8V19A2.500 2.500 0 0 1 21.500 21.500H7.500A2.500 2.500 0 0 1 5 19Z" fill="#1373d1" opacity=".85"/><rect x="0" y="9.500" width="11" height="11" rx="2" fill="#0f5fbd"/><text x="5.500" y="18.300" font-family="Liberation Sans, sans-serif" font-weight="700" font-size="8.500" fill="#fff" text-anchor="middle">O</text></svg>
 <svg style="left:1170.500px;top:13px" width="23" height="23" viewBox="0 0 23 23"><rect x="5" y=".5" width="17.500" height="22" rx="2.500" fill="#c35ad6"/><path d="M12 .5H20A2.500 2.500 0 0 1 22.500 3V9H16V5H12Z" fill="#e08bef"/><path d="M5 14H22.500V20A2.500 2.500 0 0 1 20 22.500H7.500A2.500 2.500 0 0 1 5 20Z" fill="#9b2fb5"/><rect x="0" y="9" width="11.500" height="11.500" rx="2" fill="#7719aa"/><text x="5.800" y="18" font-family="Liberation Sans, sans-serif" font-weight="700" font-size="8.500" fill="#fff" text-anchor="middle">N</text></svg>
 <div style="left:1216px;top:13px;width:22px;height:22px;border-radius:5.500px;background:#3a1d96;box-shadow:inset 0 -3px 4px #24105f"></div>
 <svg style="left:1219px;top:16px" width="16" height="16" viewBox="0 0 16 16"><path d="M12 4.500A5 5 0 1 0 12 11.500" stroke="#fff" stroke-width="2.600" fill="none"/><path d="M8 8H13V13" stroke="#fff" stroke-width="2.400" fill="none"/><circle cx="2" cy="2" r=".8" fill="#fff"/><circle cx="14" cy="2.500" r=".7" fill="#fff"/></svg>
 <svg style="left:1258.500px;top:13px" width="23" height="23" viewBox="0 0 23 23"><rect x="5" y=".5" width="17.500" height="22" rx="2.500" fill="#21a366"/><rect x="5" y=".5" width="9" height="7.500" fill="#6fd06f"/><path d="M14 .5H20A2.500 2.500 0 0 1 22.500 3V8H14Z" fill="#a7e27c"/><rect x="5" y="8" width="17.500" height="7.500" fill="#1e8e4e"/><path d="M5 15.500H22.500V20A2.500 2.500 0 0 1 20 22.500H7.500A2.500 2.500 0 0 1 5 20Z" fill="#176b3a"/><rect x="0" y="9" width="11.500" height="11.500" rx="2" fill="#107c41"/><text x="5.800" y="18" font-family="Liberation Sans, sans-serif" font-weight="700" font-size="8.500" fill="#fff" text-anchor="middle">X</text></svg>
 <svg style="left:1306px;top:11.7px" width="18" height="25" viewBox="0 0 18 25"><rect x="0" y="0" width="18" height="25" rx="1.500" fill="#5a6b7b"/><rect x="2" y="2" width="14" height="5" fill="#5ec8f2"/><g fill="#dfe5ea"><rect x="2" y="9" width="4" height="3.500"/><rect x="7" y="9" width="4" height="3.500"/><rect x="2" y="14" width="4" height="3.500"/><rect x="7" y="14" width="4" height="3.500"/><rect x="2" y="19" width="4" height="3.500"/><rect x="7" y="19" width="4" height="3.500"/><rect x="12" y="9" width="4" height="3.500"/></g><rect x="12" y="14" width="4" height="8.500" fill="#1a5fa8"/></svg>
 <div style="left:1348px;top:13px;width:21.500px;height:21.500px;border-radius:4px;background:#b30b00"></div>
 <svg style="left:1351.500px;top:16.5px" width="15" height="14" viewBox="0 0 15 14"><path d="M1 12.500C3 12 5.500 8 6.500 4.500C7 2.500 7 1 6.300 1C5.500 1 5.500 3 6.500 5.500C7.500 8 10 10 13 10C14.500 10 14.300 8.800 13 8.700C10 8.500 4 10 1 12.500Z" stroke="#fff" stroke-width="1.300" fill="none" stroke-linejoin="round"/></svg>
 <div style="left:872.2px;top:40.3px;width:6px;height:2.500px;border-radius:1.300px;background:#8a8a8a"></div>
 <div style="left:916px;top:40.3px;width:6px;height:2.500px;border-radius:1.300px;background:#8a8a8a"></div>
 <div style="left:1135px;top:40.3px;width:6px;height:2.500px;border-radius:1.300px;background:#8a8a8a"></div>
 <div style="left:1179.5px;top:40.3px;width:6px;height:2.500px;border-radius:1.300px;background:#8a8a8a"></div>
 <div style="left:1224px;top:40.3px;width:6px;height:2.500px;border-radius:1.300px;background:#8a8a8a"></div>
 <div style="left:1267.5px;top:40.3px;width:6px;height:2.500px;border-radius:1.300px;background:#8a8a8a"></div>
 <div style="left:1311.8px;top:40.3px;width:6px;height:2.500px;border-radius:1.300px;background:#8a8a8a"></div>
 <div style="left:1355.8px;top:40.3px;width:6px;height:2.500px;border-radius:1.300px;background:#8a8a8a"></div>
 <svg style="left:1700px;top:20.5px" width="11" height="7" viewBox="0 0 11 7"><path d="M.8 6.200L5.500 1.300L10.200 6.200" stroke="#1a1a1a" stroke-width="1.400" fill="none"/></svg>
 <svg style="left:1731px;top:16px" width="12" height="16" viewBox="0 0 12 16"><rect x="3.800" y=".6" width="4.400" height="9" rx="2.200" stroke="#2a5fb8" stroke-width="1.200" fill="none"/><path d="M.8 7.500A5.200 5.200 0 0 0 11.200 7.500M6 12.700V15.500" stroke="#2a5fb8" stroke-width="1.200" fill="none"/></svg>
 <svg style="left:1761px;top:17.7px" width="16" height="12" viewBox="0 0 16 12"><g stroke="#1a1a1a" stroke-width="1.200" fill="none"><path d="M.8 4.200A10.200 10.200 0 0 1 15.200 4.200"/><path d="M3.200 6.700A6.800 6.800 0 0 1 12.800 6.700"/><path d="M5.600 9A3.400 3.400 0 0 1 10.400 9"/></g><circle cx="8" cy="10.800" r="1.100" fill="#1a1a1a"/></svg>
 <svg style="left:1785px;top:17px" width="17" height="14" viewBox="0 0 17 14"><g stroke="#1a1a1a" stroke-width="1.100" fill="none"><path d="M.8 4.500H3.500L7 1.200V12.800L3.500 9.500H.8Z"/><path d="M9.300 4.500A3.500 3.500 0 0 1 9.300 9.500M11.300 2.500A6.300 6.300 0 0 1 11.300 11.500M13.500 .8A8.800 8.800 0 0 1 13.500 13.200"/></g></svg>
 <svg style="left:1809px;top:16.5px" width="21" height="13" viewBox="0 0 21 13"><rect x=".7" y="3.200" width="17.600" height="9" rx="2.300" stroke="#1a1a1a" stroke-width="1.200" fill="none"/><rect x="2.300" y="4.800" width="14.400" height="5.800" rx="1" fill="#107c10"/><rect x="19" y="5.800" width="1.500" height="3.800" rx=".7" fill="#1a1a1a"/><path d="M11 -.8L7 5.800H9.400L8.300 10L12.800 3.800H10.300Z" fill="#111" stroke="#eee" stroke-width=".7"/></svg>
 <span style="left:1850.6px;top:8.8px;font-size:11.8px;line-height:15px;color:#1a1a1a;letter-spacing:0.091px">11:48 AM</span>
 <span style="left:1846px;top:24.7px;font-size:11.8px;line-height:15px;color:#1a1a1a;letter-spacing:0.202px">3/24/2026</span>
</div>
</body>
</html>
